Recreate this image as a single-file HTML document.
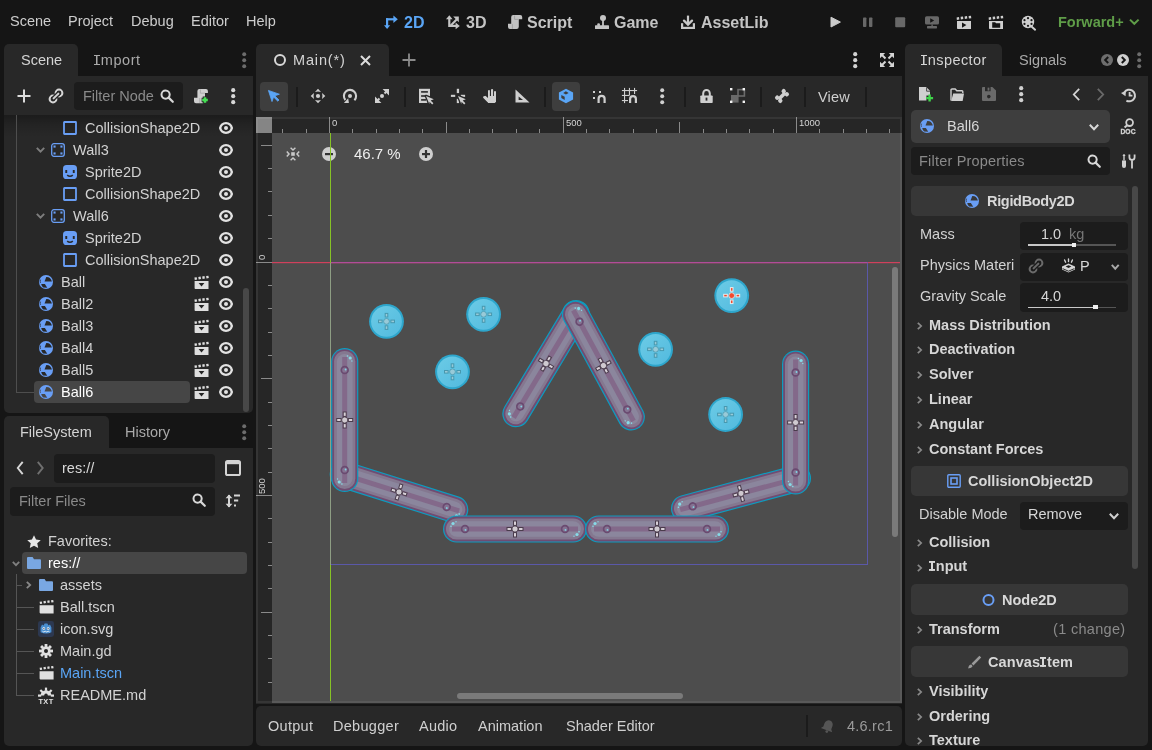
<!DOCTYPE html>
<html><head><meta charset="utf-8">
<style>
*{margin:0;padding:0;box-sizing:border-box}
html,body{width:1152px;height:750px;overflow:hidden;background:#151515}
body{font-family:"Liberation Sans",sans-serif;font-size:14.5px;color:#d2d2d2;position:relative}
.a{position:absolute}
.t{position:absolute;white-space:nowrap;line-height:normal;will-change:transform}
svg{position:absolute;overflow:visible;will-change:transform}
</style></head><body>
<div class="t" style="left:10px;top:13.08px;font-size:14.5px;color:#cdcdcd;">Scene</div>
<div class="t" style="left:68px;top:13.08px;font-size:14.5px;color:#cdcdcd;">Project</div>
<div class="t" style="left:131px;top:13.08px;font-size:14.5px;color:#cdcdcd;">Debug</div>
<div class="t" style="left:191px;top:13.08px;font-size:14.5px;color:#cdcdcd;">Editor</div>
<div class="t" style="left:246px;top:13.08px;font-size:14.5px;color:#cdcdcd;">Help</div>
<svg style="left:384px;top:15px" width="14" height="14" viewBox="0 0 14 14"><g fill="#5aa5f5"><rect x="2" y="3.2" width="2.2" height="8"/><path d="M0 10.2h6.2L3.1 14z"/><rect x="2" y="3.2" width="8" height="2.2"/><path d="M9.4 0.5v7.4L13.8 4.2z"/></g></svg>
<div class="t" style="left:403.5px;top:14.22px;font-size:16px;color:#5aa5f5;font-weight:bold;">2D</div>
<svg style="left:446px;top:15px" width="14" height="14" viewBox="0 0 14 14"><g fill="#c4c4c4"><rect x="2.2" y="3" width="2.2" height="9"/><path d="M0 4.3L3.3 0.3 6.6 4.3z"/><rect x="3" y="9.8" width="8" height="2.2"/><path d="M9.6 7.6l4.2 3.3-4.2 3.3z"/><path d="M3.3 10.4L10.6 3.1 12.1 4.6 4.8 11.9z"/><path d="M7.2 1.6h5.6v5.6z"/></g></svg>
<div class="t" style="left:465.5px;top:14.22px;font-size:16px;color:#c4c4c4;font-weight:bold;">3D</div>
<svg style="left:508px;top:15px" width="14" height="14" viewBox="0 0 14 14"><g fill="#c2c2c2"><path d="M5.2 0h7a2 2 0 0 1 2 2v2.2h-3.4v7.6a2.2 2.2 0 0 1-2.2 2.2H2a2 2 0 0 1-2-2V8.8h3.2V2a2 2 0 0 1 2-2z"/></g><path d="M4.4 9.2v4.6" stroke="#9a9a9a" stroke-width="0.8"/><path d="M6.6 0.6v3.8h4" stroke="#9a9a9a" stroke-width="0.8" fill="none"/></svg>
<div class="t" style="left:527.2px;top:14.22px;font-size:16px;color:#c4c4c4;font-weight:bold;">Script</div>
<svg style="left:595px;top:15px" width="14" height="14" viewBox="0 0 14 14"><g fill="#c4c4c4"><circle cx="8" cy="3" r="3"/><rect x="7.1" y="4" width="1.8" height="7"/><rect x="0" y="10.2" width="14" height="3.8" rx="0.6"/><rect x="2.2" y="8.2" width="2.8" height="3" rx="1.3"/></g></svg>
<div class="t" style="left:614.2px;top:14.22px;font-size:16px;color:#c4c4c4;font-weight:bold;">Game</div>
<svg style="left:681px;top:15px" width="14" height="14" viewBox="0 0 14 14"><g fill="#c8c8c8"><rect x="0" y="8.2" width="2.2" height="5.8"/><rect x="11.8" y="8.2" width="2.2" height="5.8"/><rect x="0" y="11.8" width="14" height="2.2"/><rect x="5.9" y="0.6" width="2.2" height="8"/></g><path d="M3 5.6l4 4 4-4" stroke="#c8c8c8" stroke-width="2.3" fill="none" stroke-linecap="round"/></svg>
<div class="t" style="left:700.5px;top:14.22px;font-size:16px;color:#c4c4c4;font-weight:bold;">AssetLib</div>
<svg style="left:830px;top:16px" width="12" height="12" viewBox="0 0 12 12"><path d="M1 1.2v9.8l9.4-4.9z" fill="#cbcbcb" stroke="#cbcbcb" stroke-width="1" stroke-linejoin="round"/></svg>
<svg style="left:862px;top:17px" width="12" height="11" viewBox="0 0 12 11"><rect x="1" y="0.5" width="3.4" height="9.6" rx="0.8" fill="#686868"/><rect x="7" y="0.5" width="3.4" height="9.6" rx="0.8" fill="#686868"/></svg>
<svg style="left:895px;top:17px" width="11" height="11" viewBox="0 0 11 11"><rect x="0.2" y="0.3" width="10" height="10" rx="1" fill="#686868"/></svg>
<svg style="left:925px;top:16px" width="14" height="13" viewBox="0 0 14 13"><rect x="0" y="0.3" width="14" height="8.3" rx="1.6" fill="#686868"/><path d="M5.2 2.2v4.6l4-2.3z" fill="#151515"/><rect x="6.4" y="8.4" width="1.4" height="2" fill="#686868"/><rect x="2" y="10" width="10" height="2.4" rx="0.6" fill="#686868"/></svg>
<svg style="left:956px;top:16px" width="16" height="14" viewBox="0 0 16 14"><g fill="#cfcfcf"><path d="M0.6 1.4l2.4-.4.3 2.6-2.4.4z"/><path d="M4.6 0.8l2.4-.4.3 2.6-2.4.4z"/><path d="M8.6 0.4l2.4-.4.3 2.6-2.4.4z"/><path d="M12.6 0l2.4-.3.3 2.6-2.4.3z"/><path d="M1 5h14v8H1.8a.8.8 0 0 1-.8-.8z"/></g><path d="M6 6.4v5.4l4.4-2.7z" fill="#151515"/></svg>
<svg style="left:988px;top:16px" width="16" height="14" viewBox="0 0 16 14"><g fill="#cfcfcf"><path d="M0.6 1.4l2.4-.4.3 2.6-2.4.4z"/><path d="M4.6 0.8l2.4-.4.3 2.6-2.4.4z"/><path d="M8.6 0.4l2.4-.4.3 2.6-2.4.4z"/><path d="M12.6 0l2.4-.3.3 2.6-2.4.3z"/><path d="M1 5h14v8H1.8a.8.8 0 0 1-.8-.8z"/></g><path d="M4.2 6.2h3l.8 1h4.2v4.6H4.2z" fill="#151515"/></svg>
<svg style="left:1021px;top:15px" width="16" height="16" viewBox="0 0 16 16"><circle cx="7" cy="7" r="6.2" fill="#cfcfcf"/><path d="M10.5 11.5l3.6 3.2" stroke="#cfcfcf" stroke-width="2" stroke-linecap="round"/><g fill="#151515"><circle cx="7" cy="3.2" r="1.1"/><circle cx="7" cy="10.8" r="1.1"/><circle cx="3.5" cy="5.2" r="1.1"/><circle cx="10.5" cy="5.2" r="1.1"/><circle cx="3.5" cy="8.9" r="1.1"/><circle cx="10.5" cy="8.9" r="1.1"/></g></svg>
<div class="t" style="left:1058.2px;top:14.08px;font-size:14.5px;color:#5f9d48;font-weight:bold;">Forward+</div>
<svg style="left:1129px;top:18px" width="11" height="8" viewBox="0 0 11 8"><path d="M1 1.6l4.3 4.2 4.3-4.2" stroke="#5f9d48" stroke-width="2" fill="none"/></svg>
<div class="a" style="left:4px;top:76px;width:249px;height:337px;background:#282828;border-radius:0 0 5px 5px"></div>
<div class="a" style="left:4px;top:44px;width:74px;height:33px;background:#282828;border-radius:5px 5px 0 0"></div>
<div class="t" style="left:20.7px;top:51.98px;font-size:14.5px;color:#d4d4d4;">Scene</div>
<div class="t" style="left:94.4px;top:51.98px;font-size:14.5px;color:#a9a9a9;letter-spacing:0.55px;"><span style="display:inline-block;width:5.4px;height:10.38px;margin:0 1.1px 0 0.3px;vertical-align:baseline;background:linear-gradient(#a9a9a9,#a9a9a9) 50% 0/1.5px 100% no-repeat,linear-gradient(#a9a9a9,#a9a9a9) 0 0/100% 1.3px no-repeat,linear-gradient(#a9a9a9,#a9a9a9) 0 100%/100% 1.3px no-repeat"></span>mport</div>
<svg style="left:241px;top:51px" width="7" height="19" viewBox="0 0 7 19"><circle cx="3.2" cy="3.2" r="2.0" fill="#6c6c6c"/><circle cx="3.2" cy="9.2" r="2.0" fill="#6c6c6c"/><circle cx="3.2" cy="15.2" r="2.0" fill="#6c6c6c"/></svg>
<svg style="left:17px;top:89px" width="14" height="14" viewBox="0 0 14 14"><path d="M7 0.5v13M0.5 7h13" stroke="#dcdcdc" stroke-width="2"/></svg>
<svg style="left:44px;top:84px" width="24" height="24" viewBox="0 0 24 24"><circle cx="15" cy="9" r="3.4" stroke="#d4d4d4" stroke-width="2" fill="none"/><circle cx="9" cy="15" r="3.4" stroke="#d4d4d4" stroke-width="2" fill="none"/><path d="M9.6 14.4L14.4 9.6" stroke="#282828" stroke-width="4.4" stroke-linecap="round"/><path d="M9.6 14.4L14.4 9.6" stroke="#d4d4d4" stroke-width="2" stroke-linecap="round"/></svg>
<div class="a" style="left:74px;top:82px;width:109px;height:28px;background:#1c1c1c;border-radius:4px;"></div>
<div class="t" style="left:83px;top:87.88px;font-size:14.5px;color:#8a8a8a;">Filter Node</div>
<svg style="left:160px;top:89px" width="14" height="14" viewBox="0 0 14 14"><circle cx="5.6" cy="5.6" r="4.1" stroke="#d8d8d8" stroke-width="2" fill="none"/><path d="M8.6 8.6l4.2 4.2" stroke="#d8d8d8" stroke-width="2.2" stroke-linecap="round"/></svg>
<svg style="left:190px;top:84px" width="24" height="24" viewBox="0 0 24 24"><path d="M9.4 5h6.6a1.9 1.9 0 0 1 1.9 1.9V9H15V17.2a2 2 0 0 1-2 2H6a2 2 0 0 1-2-2V13.8h3.4V7a2 2 0 0 1 2-2z" fill="#cfcfcf"/><path d="M9.8 14v5M10.4 5.6v3.6h4.6" stroke="#a8a8a8" stroke-width="0.9" fill="none"/><path d="M15 12.6v6.8M11.6 16h6.8" stroke="#282828" stroke-width="4.6"/><path d="M15 13.2v5.6M12.2 16h5.6" stroke="#44e053" stroke-width="2.5"/></svg>
<svg style="left:230px;top:87px" width="7" height="19" viewBox="0 0 7 19"><circle cx="3.2" cy="3.2" r="2.1" fill="#d8d8d8"/><circle cx="3.2" cy="9.2" r="2.1" fill="#d8d8d8"/><circle cx="3.2" cy="15.2" r="2.1" fill="#d8d8d8"/></svg>
<div class="a" style="left:4px;top:115px;width:249px;height:22px;background:linear-gradient(rgba(0,0,0,0.32),rgba(0,0,0,0.12) 45%,rgba(0,0,0,0));"></div>
<div class="a" style="left:16px;top:115px;width:1px;height:278px;background:#4e4e4e;"></div>
<div class="a" style="left:16px;top:392px;width:18px;height:1px;background:#4e4e4e;"></div>
<svg style="left:63px;top:121px" width="14" height="14" viewBox="0 0 14 14"><rect x="1" y="1" width="12" height="12" stroke="#699ef5" stroke-width="1.8" fill="none" rx="0.4"/></svg>
<div class="t" style="left:84.7px;top:119.88px;font-size:14.5px;color:#d2d2d2;">CollisionShape2D</div>
<svg style="left:219px;top:122px" width="15" height="13" viewBox="0 0 15 13"><ellipse cx="7" cy="6" rx="5.7" ry="4.8" stroke="#e2e2e2" stroke-width="2.3" fill="none"/><path d="M0 6L2 3.6V8.4z M14 6L12 3.6V8.4z" fill="#e2e2e2"/><circle cx="7" cy="6" r="2" fill="#e2e2e2"/></svg>
<svg style="left:36px;top:147px" width="9" height="5.5" viewBox="0 0 9 5.5"><path d="M0.8 0.8L4.5 4.7L8.2 0.8" stroke="#7e7e7e" stroke-width="1.9" fill="none"/></svg>
<svg style="left:51px;top:143px" width="14" height="14" viewBox="0 0 14 14"><rect x="0.7" y="0.7" width="12.6" height="12.6" rx="2.2" stroke="#699ef5" stroke-width="1.3" fill="none"/><g fill="#699ef5"><rect x="2.5" y="2.5" width="2.1" height="2.1"/><rect x="9.4" y="2.5" width="2.1" height="2.1"/><rect x="2.5" y="9.4" width="2.1" height="2.1"/><rect x="9.4" y="9.4" width="2.1" height="2.1"/></g></svg>
<div class="t" style="left:72.6px;top:141.88px;font-size:14.5px;color:#d2d2d2;">Wall3</div>
<svg style="left:219px;top:144px" width="15" height="13" viewBox="0 0 15 13"><ellipse cx="7" cy="6" rx="5.7" ry="4.8" stroke="#e2e2e2" stroke-width="2.3" fill="none"/><path d="M0 6L2 3.6V8.4z M14 6L12 3.6V8.4z" fill="#e2e2e2"/><circle cx="7" cy="6" r="2" fill="#e2e2e2"/></svg>
<svg style="left:63px;top:165px" width="14" height="14" viewBox="0 0 14 14"><rect x="0" y="0" width="14" height="14" rx="3.6" fill="#699ef5"/><rect x="2.3" y="5" width="1.9" height="3" fill="#282828"/><rect x="9.8" y="5" width="1.9" height="3" fill="#282828"/><path d="M4.2 10.2 Q7 12.4 9.8 10.2" stroke="#282828" stroke-width="1.6" fill="none"/></svg>
<div class="t" style="left:84.7px;top:163.88px;font-size:14.5px;color:#d2d2d2;">Sprite2D</div>
<svg style="left:219px;top:166px" width="15" height="13" viewBox="0 0 15 13"><ellipse cx="7" cy="6" rx="5.7" ry="4.8" stroke="#e2e2e2" stroke-width="2.3" fill="none"/><path d="M0 6L2 3.6V8.4z M14 6L12 3.6V8.4z" fill="#e2e2e2"/><circle cx="7" cy="6" r="2" fill="#e2e2e2"/></svg>
<svg style="left:63px;top:187px" width="14" height="14" viewBox="0 0 14 14"><rect x="1" y="1" width="12" height="12" stroke="#699ef5" stroke-width="1.8" fill="none" rx="0.4"/></svg>
<div class="t" style="left:84.7px;top:185.88px;font-size:14.5px;color:#d2d2d2;">CollisionShape2D</div>
<svg style="left:219px;top:188px" width="15" height="13" viewBox="0 0 15 13"><ellipse cx="7" cy="6" rx="5.7" ry="4.8" stroke="#e2e2e2" stroke-width="2.3" fill="none"/><path d="M0 6L2 3.6V8.4z M14 6L12 3.6V8.4z" fill="#e2e2e2"/><circle cx="7" cy="6" r="2" fill="#e2e2e2"/></svg>
<svg style="left:36px;top:213px" width="9" height="5.5" viewBox="0 0 9 5.5"><path d="M0.8 0.8L4.5 4.7L8.2 0.8" stroke="#7e7e7e" stroke-width="1.9" fill="none"/></svg>
<svg style="left:51px;top:209px" width="14" height="14" viewBox="0 0 14 14"><rect x="0.7" y="0.7" width="12.6" height="12.6" rx="2.2" stroke="#699ef5" stroke-width="1.3" fill="none"/><g fill="#699ef5"><rect x="2.5" y="2.5" width="2.1" height="2.1"/><rect x="9.4" y="2.5" width="2.1" height="2.1"/><rect x="2.5" y="9.4" width="2.1" height="2.1"/><rect x="9.4" y="9.4" width="2.1" height="2.1"/></g></svg>
<div class="t" style="left:72.6px;top:207.88px;font-size:14.5px;color:#d2d2d2;">Wall6</div>
<svg style="left:219px;top:210px" width="15" height="13" viewBox="0 0 15 13"><ellipse cx="7" cy="6" rx="5.7" ry="4.8" stroke="#e2e2e2" stroke-width="2.3" fill="none"/><path d="M0 6L2 3.6V8.4z M14 6L12 3.6V8.4z" fill="#e2e2e2"/><circle cx="7" cy="6" r="2" fill="#e2e2e2"/></svg>
<svg style="left:63px;top:231px" width="14" height="14" viewBox="0 0 14 14"><rect x="0" y="0" width="14" height="14" rx="3.6" fill="#699ef5"/><rect x="2.3" y="5" width="1.9" height="3" fill="#282828"/><rect x="9.8" y="5" width="1.9" height="3" fill="#282828"/><path d="M4.2 10.2 Q7 12.4 9.8 10.2" stroke="#282828" stroke-width="1.6" fill="none"/></svg>
<div class="t" style="left:84.7px;top:229.88px;font-size:14.5px;color:#d2d2d2;">Sprite2D</div>
<svg style="left:219px;top:232px" width="15" height="13" viewBox="0 0 15 13"><ellipse cx="7" cy="6" rx="5.7" ry="4.8" stroke="#e2e2e2" stroke-width="2.3" fill="none"/><path d="M0 6L2 3.6V8.4z M14 6L12 3.6V8.4z" fill="#e2e2e2"/><circle cx="7" cy="6" r="2" fill="#e2e2e2"/></svg>
<svg style="left:63px;top:253px" width="14" height="14" viewBox="0 0 14 14"><rect x="1" y="1" width="12" height="12" stroke="#699ef5" stroke-width="1.8" fill="none" rx="0.4"/></svg>
<div class="t" style="left:84.7px;top:251.88px;font-size:14.5px;color:#d2d2d2;">CollisionShape2D</div>
<svg style="left:219px;top:254px" width="15" height="13" viewBox="0 0 15 13"><ellipse cx="7" cy="6" rx="5.7" ry="4.8" stroke="#e2e2e2" stroke-width="2.3" fill="none"/><path d="M0 6L2 3.6V8.4z M14 6L12 3.6V8.4z" fill="#e2e2e2"/><circle cx="7" cy="6" r="2" fill="#e2e2e2"/></svg>
<svg style="left:39px;top:275px" width="14" height="14" viewBox="0 0 14 14"><circle cx="7" cy="7" r="7" fill="#699ef5"/><path d="M5.5 6.5L7.3 2.1Q11.2 1.7 12.9 6.5z" fill="#282828"/><path d="M2.2 8.9H5.9L8.2 12.7 4.2 12.5Q2.6 11.2 2.2 8.9z" fill="#282828"/><path d="M1.6 4.6A6.2 6.2 0 0 0 1.4 8" stroke="#282828" stroke-width="0.7" fill="none"/></svg>
<div class="t" style="left:60.5px;top:273.88px;font-size:14.5px;color:#d2d2d2;">Ball</div>
<svg style="left:194.4px;top:276px" width="15" height="13" viewBox="0 0 15 13"><g fill="#dedede"><path d="M0.4 1.6l2.3-.4.4 2.4-2.3.4z"/><path d="M4.3 1l2.3-.4.4 2.4-2.3.4z"/><path d="M8.2 0.5l2.3-.4.4 2.4-2.3.4z"/><path d="M12.1 0l2.3-.3.4 2.4-2.3.3z"/><path d="M0.6 5h13.9v8H1.4a.8.8 0 0 1-.8-.8z"/></g><path d="M4.6 7h5.8l-2.9 3.5z" fill="#242424"/></svg>
<svg style="left:219px;top:276px" width="15" height="13" viewBox="0 0 15 13"><ellipse cx="7" cy="6" rx="5.7" ry="4.8" stroke="#e2e2e2" stroke-width="2.3" fill="none"/><path d="M0 6L2 3.6V8.4z M14 6L12 3.6V8.4z" fill="#e2e2e2"/><circle cx="7" cy="6" r="2" fill="#e2e2e2"/></svg>
<svg style="left:39px;top:297px" width="14" height="14" viewBox="0 0 14 14"><circle cx="7" cy="7" r="7" fill="#699ef5"/><path d="M5.5 6.5L7.3 2.1Q11.2 1.7 12.9 6.5z" fill="#282828"/><path d="M2.2 8.9H5.9L8.2 12.7 4.2 12.5Q2.6 11.2 2.2 8.9z" fill="#282828"/><path d="M1.6 4.6A6.2 6.2 0 0 0 1.4 8" stroke="#282828" stroke-width="0.7" fill="none"/></svg>
<div class="t" style="left:60.5px;top:295.88px;font-size:14.5px;color:#d2d2d2;">Ball2</div>
<svg style="left:194.4px;top:298px" width="15" height="13" viewBox="0 0 15 13"><g fill="#dedede"><path d="M0.4 1.6l2.3-.4.4 2.4-2.3.4z"/><path d="M4.3 1l2.3-.4.4 2.4-2.3.4z"/><path d="M8.2 0.5l2.3-.4.4 2.4-2.3.4z"/><path d="M12.1 0l2.3-.3.4 2.4-2.3.3z"/><path d="M0.6 5h13.9v8H1.4a.8.8 0 0 1-.8-.8z"/></g><path d="M4.6 7h5.8l-2.9 3.5z" fill="#242424"/></svg>
<svg style="left:219px;top:298px" width="15" height="13" viewBox="0 0 15 13"><ellipse cx="7" cy="6" rx="5.7" ry="4.8" stroke="#e2e2e2" stroke-width="2.3" fill="none"/><path d="M0 6L2 3.6V8.4z M14 6L12 3.6V8.4z" fill="#e2e2e2"/><circle cx="7" cy="6" r="2" fill="#e2e2e2"/></svg>
<svg style="left:39px;top:319px" width="14" height="14" viewBox="0 0 14 14"><circle cx="7" cy="7" r="7" fill="#699ef5"/><path d="M5.5 6.5L7.3 2.1Q11.2 1.7 12.9 6.5z" fill="#282828"/><path d="M2.2 8.9H5.9L8.2 12.7 4.2 12.5Q2.6 11.2 2.2 8.9z" fill="#282828"/><path d="M1.6 4.6A6.2 6.2 0 0 0 1.4 8" stroke="#282828" stroke-width="0.7" fill="none"/></svg>
<div class="t" style="left:60.5px;top:317.88px;font-size:14.5px;color:#d2d2d2;">Ball3</div>
<svg style="left:194.4px;top:320px" width="15" height="13" viewBox="0 0 15 13"><g fill="#dedede"><path d="M0.4 1.6l2.3-.4.4 2.4-2.3.4z"/><path d="M4.3 1l2.3-.4.4 2.4-2.3.4z"/><path d="M8.2 0.5l2.3-.4.4 2.4-2.3.4z"/><path d="M12.1 0l2.3-.3.4 2.4-2.3.3z"/><path d="M0.6 5h13.9v8H1.4a.8.8 0 0 1-.8-.8z"/></g><path d="M4.6 7h5.8l-2.9 3.5z" fill="#242424"/></svg>
<svg style="left:219px;top:320px" width="15" height="13" viewBox="0 0 15 13"><ellipse cx="7" cy="6" rx="5.7" ry="4.8" stroke="#e2e2e2" stroke-width="2.3" fill="none"/><path d="M0 6L2 3.6V8.4z M14 6L12 3.6V8.4z" fill="#e2e2e2"/><circle cx="7" cy="6" r="2" fill="#e2e2e2"/></svg>
<svg style="left:39px;top:341px" width="14" height="14" viewBox="0 0 14 14"><circle cx="7" cy="7" r="7" fill="#699ef5"/><path d="M5.5 6.5L7.3 2.1Q11.2 1.7 12.9 6.5z" fill="#282828"/><path d="M2.2 8.9H5.9L8.2 12.7 4.2 12.5Q2.6 11.2 2.2 8.9z" fill="#282828"/><path d="M1.6 4.6A6.2 6.2 0 0 0 1.4 8" stroke="#282828" stroke-width="0.7" fill="none"/></svg>
<div class="t" style="left:60.5px;top:339.88px;font-size:14.5px;color:#d2d2d2;">Ball4</div>
<svg style="left:194.4px;top:342px" width="15" height="13" viewBox="0 0 15 13"><g fill="#dedede"><path d="M0.4 1.6l2.3-.4.4 2.4-2.3.4z"/><path d="M4.3 1l2.3-.4.4 2.4-2.3.4z"/><path d="M8.2 0.5l2.3-.4.4 2.4-2.3.4z"/><path d="M12.1 0l2.3-.3.4 2.4-2.3.3z"/><path d="M0.6 5h13.9v8H1.4a.8.8 0 0 1-.8-.8z"/></g><path d="M4.6 7h5.8l-2.9 3.5z" fill="#242424"/></svg>
<svg style="left:219px;top:342px" width="15" height="13" viewBox="0 0 15 13"><ellipse cx="7" cy="6" rx="5.7" ry="4.8" stroke="#e2e2e2" stroke-width="2.3" fill="none"/><path d="M0 6L2 3.6V8.4z M14 6L12 3.6V8.4z" fill="#e2e2e2"/><circle cx="7" cy="6" r="2" fill="#e2e2e2"/></svg>
<svg style="left:39px;top:363px" width="14" height="14" viewBox="0 0 14 14"><circle cx="7" cy="7" r="7" fill="#699ef5"/><path d="M5.5 6.5L7.3 2.1Q11.2 1.7 12.9 6.5z" fill="#282828"/><path d="M2.2 8.9H5.9L8.2 12.7 4.2 12.5Q2.6 11.2 2.2 8.9z" fill="#282828"/><path d="M1.6 4.6A6.2 6.2 0 0 0 1.4 8" stroke="#282828" stroke-width="0.7" fill="none"/></svg>
<div class="t" style="left:60.5px;top:361.88px;font-size:14.5px;color:#d2d2d2;">Ball5</div>
<svg style="left:194.4px;top:364px" width="15" height="13" viewBox="0 0 15 13"><g fill="#dedede"><path d="M0.4 1.6l2.3-.4.4 2.4-2.3.4z"/><path d="M4.3 1l2.3-.4.4 2.4-2.3.4z"/><path d="M8.2 0.5l2.3-.4.4 2.4-2.3.4z"/><path d="M12.1 0l2.3-.3.4 2.4-2.3.3z"/><path d="M0.6 5h13.9v8H1.4a.8.8 0 0 1-.8-.8z"/></g><path d="M4.6 7h5.8l-2.9 3.5z" fill="#242424"/></svg>
<svg style="left:219px;top:364px" width="15" height="13" viewBox="0 0 15 13"><ellipse cx="7" cy="6" rx="5.7" ry="4.8" stroke="#e2e2e2" stroke-width="2.3" fill="none"/><path d="M0 6L2 3.6V8.4z M14 6L12 3.6V8.4z" fill="#e2e2e2"/><circle cx="7" cy="6" r="2" fill="#e2e2e2"/></svg>
<div class="a" style="left:34px;top:381px;width:156px;height:22px;background:#464646;border-radius:4px;"></div>
<svg style="left:39px;top:385px" width="14" height="14" viewBox="0 0 14 14"><circle cx="7" cy="7" r="7" fill="#699ef5"/><path d="M5.5 6.5L7.3 2.1Q11.2 1.7 12.9 6.5z" fill="#464646"/><path d="M2.2 8.9H5.9L8.2 12.7 4.2 12.5Q2.6 11.2 2.2 8.9z" fill="#464646"/><path d="M1.6 4.6A6.2 6.2 0 0 0 1.4 8" stroke="#464646" stroke-width="0.7" fill="none"/></svg>
<div class="t" style="left:60.5px;top:383.88px;font-size:14.5px;color:#ffffff;">Ball6</div>
<svg style="left:194.4px;top:386px" width="15" height="13" viewBox="0 0 15 13"><g fill="#dedede"><path d="M0.4 1.6l2.3-.4.4 2.4-2.3.4z"/><path d="M4.3 1l2.3-.4.4 2.4-2.3.4z"/><path d="M8.2 0.5l2.3-.4.4 2.4-2.3.4z"/><path d="M12.1 0l2.3-.3.4 2.4-2.3.3z"/><path d="M0.6 5h13.9v8H1.4a.8.8 0 0 1-.8-.8z"/></g><path d="M4.6 7h5.8l-2.9 3.5z" fill="#242424"/></svg>
<svg style="left:219px;top:386px" width="15" height="13" viewBox="0 0 15 13"><ellipse cx="7" cy="6" rx="5.7" ry="4.8" stroke="#e2e2e2" stroke-width="2.3" fill="none"/><path d="M0 6L2 3.6V8.4z M14 6L12 3.6V8.4z" fill="#e2e2e2"/><circle cx="7" cy="6" r="2" fill="#e2e2e2"/></svg>
<div class="a" style="left:243px;top:288px;width:6px;height:124px;background:#484848;border-radius:3px;"></div>
<div class="a" style="left:4px;top:448px;width:249px;height:298px;background:#282828;border-radius:0 0 5px 5px"></div>
<div class="a" style="left:4px;top:416px;width:105px;height:33px;background:#282828;border-radius:5px 5px 0 0"></div>
<div class="t" style="left:20.2px;top:423.78px;font-size:14.5px;color:#d4d4d4;">FileSystem</div>
<div class="t" style="left:125.4px;top:423.78px;font-size:14.5px;color:#a9a9a9;">History</div>
<svg style="left:241px;top:423px" width="7" height="19" viewBox="0 0 7 19"><circle cx="3.2" cy="3.2" r="2.0" fill="#6c6c6c"/><circle cx="3.2" cy="9.2" r="2.0" fill="#6c6c6c"/><circle cx="3.2" cy="15.2" r="2.0" fill="#6c6c6c"/></svg>
<svg style="left:17px;top:461px" width="6.5" height="14" viewBox="0 0 6.5 14"><path d="M5.7 0.8L0.8 7.0L5.7 13.2" stroke="#d6d6d6" stroke-width="1.9" fill="none"/></svg>
<svg style="left:37px;top:461px" width="6.5" height="14" viewBox="0 0 6.5 14"><path d="M0.8 0.8L5.7 7.0L0.8 13.2" stroke="#707070" stroke-width="1.9" fill="none"/></svg>
<div class="a" style="left:54px;top:454px;width:161px;height:29px;background:#1c1c1c;border-radius:4px;"></div>
<div class="t" style="left:62.2px;top:460.38px;font-size:14.5px;color:#d8d8d8;">res://</div>
<svg style="left:225px;top:460px" width="16" height="16" viewBox="0 0 16 16"><rect x="1" y="1" width="14" height="14" rx="1.6" stroke="#d4d4d4" stroke-width="2" fill="none"/><rect x="1" y="1" width="14" height="3.2" fill="#d4d4d4"/></svg>
<div class="a" style="left:10px;top:487px;width:205px;height:29px;background:#1c1c1c;border-radius:4px;"></div>
<div class="t" style="left:18.6px;top:492.88px;font-size:14.5px;color:#8a8a8a;">Filter Files</div>
<svg style="left:192px;top:493px" width="14" height="14" viewBox="0 0 14 14"><circle cx="5.6" cy="5.6" r="4.1" stroke="#d8d8d8" stroke-width="2" fill="none"/><path d="M8.6 8.6l4.2 4.2" stroke="#d8d8d8" stroke-width="2.2" stroke-linecap="round"/></svg>
<svg style="left:225px;top:494px" width="16" height="15" viewBox="0 0 16 15"><path d="M4 1v12" stroke="#d4d4d4" stroke-width="2"/><path d="M0.6 4.2L4 0.6 7.4 4.2zM0.6 9.8L4 13.4 7.4 9.8z" fill="#d4d4d4"/><path d="M9 1.4h6M9 6.4h4.2M9 11.6h2" stroke="#d4d4d4" stroke-width="2"/></svg>
<svg style="left:27px;top:535px" width="14" height="13" viewBox="0 0 14 13"><path d="M7 0.3l2.05 4.3 4.7.55-3.5 3.2.95 4.65L7 10.7 2.8 13l.95-4.65L.25 5.15l4.7-.55z" fill="#e6e6e6"/></svg>
<div class="t" style="left:48.3px;top:533.38px;font-size:14.5px;color:#d2d2d2;">Favorites:</div>
<div class="a" style="left:22px;top:552px;width:225px;height:22px;background:#464646;border-radius:4px;"></div>
<svg style="left:12px;top:561px" width="8" height="5" viewBox="0 0 8 5"><path d="M0.8 0.8L4.0 4.2L7.2 0.8" stroke="#808080" stroke-width="1.8" fill="none"/></svg>
<svg style="left:27px;top:557px" width="14" height="12" viewBox="0 0 14 12"><path d="M0 1a1 1 0 0 1 1-1h4.6l1.4 2.2H13a1 1 0 0 1 1 1V11a1 1 0 0 1-1 1H1a1 1 0 0 1-1-1z" fill="#79a7e2"/></svg>
<div class="t" style="left:48.3px;top:554.88px;font-size:14.5px;color:#ffffff;">res://</div>
<div class="a" style="left:16px;top:574px;width:1px;height:121px;background:#555555;"></div>
<div class="a" style="left:16px;top:585px;width:6px;height:1px;background:#555555;"></div>
<div class="a" style="left:16px;top:607px;width:18px;height:1px;background:#555555;"></div>
<div class="a" style="left:16px;top:629px;width:18px;height:1px;background:#555555;"></div>
<div class="a" style="left:16px;top:651px;width:18px;height:1px;background:#555555;"></div>
<div class="a" style="left:16px;top:673px;width:18px;height:1px;background:#555555;"></div>
<div class="a" style="left:16px;top:695px;width:18px;height:1px;background:#555555;"></div>
<svg style="left:26px;top:581px" width="5" height="8" viewBox="0 0 5 8"><path d="M0.8 0.8L4.2 4.0L0.8 7.2" stroke="#888888" stroke-width="1.8" fill="none"/></svg>
<svg style="left:39px;top:579px" width="14" height="12" viewBox="0 0 14 12"><path d="M0 1a1 1 0 0 1 1-1h4.6l1.4 2.2H13a1 1 0 0 1 1 1V11a1 1 0 0 1-1 1H1a1 1 0 0 1-1-1z" fill="#79a7e2"/></svg>
<div class="t" style="left:60.3px;top:576.88px;font-size:14.5px;color:#d2d2d2;">assets</div>
<svg style="left:39px;top:600px" width="15" height="14" viewBox="0 0 15 14"><g fill="#e0e0e0"><path d="M0.6 1.8l2.2-.4.4 2.3-2.2.4z"/><path d="M4.4 1.2l2.2-.4.4 2.3-2.2.4z"/><path d="M8.2 0.7l2.2-.4.4 2.3-2.2.4z"/><path d="M12 0.2l2.2-.3.4 2.3-2.2.3z"/><path d="M0.6 5.2h14v8.2H1.4a.8.8 0 0 1-.8-.8z"/></g></svg>
<div class="t" style="left:60.3px;top:598.88px;font-size:14.5px;color:#d2d2d2;">Ball.tscn</div>
<svg style="left:38px;top:621px" width="16" height="16" viewBox="0 0 16 16"><rect x="0" y="0" width="16" height="16" rx="2.4" fill="#2c3850"/><path d="M2.6 6.4L4 3.6 5.6 4.6 6.6 2.6H9.4L10.4 4.6 12 3.6 13.4 6.4V11.2Q8 13.8 2.6 11.2z" fill="#4a8fd0"/><circle cx="5.8" cy="7.6" r="1.3" fill="#fff"/><circle cx="10.2" cy="7.6" r="1.3" fill="#fff"/><circle cx="5.9" cy="7.7" r="0.6" fill="#2c3850"/><circle cx="10.1" cy="7.7" r="0.6" fill="#2c3850"/><path d="M4.4 10.2L5.8 11 7.2 10.2 8.8 11 10.2 10.2 11.6 11" stroke="#fff" stroke-width="0.8" fill="none"/></svg>
<div class="t" style="left:60.3px;top:620.88px;font-size:14.5px;color:#d2d2d2;">icon.svg</div>
<svg style="left:39px;top:644px" width="14" height="14" viewBox="0 0 14 14"><g fill="#e0e0e0"><circle cx="7" cy="7" r="4.6"/><rect x="5.6" y="0" width="2.8" height="3" transform="rotate(0 7 7)"/><rect x="5.6" y="0" width="2.8" height="3" transform="rotate(45 7 7)"/><rect x="5.6" y="0" width="2.8" height="3" transform="rotate(90 7 7)"/><rect x="5.6" y="0" width="2.8" height="3" transform="rotate(135 7 7)"/><rect x="5.6" y="0" width="2.8" height="3" transform="rotate(180 7 7)"/><rect x="5.6" y="0" width="2.8" height="3" transform="rotate(225 7 7)"/><rect x="5.6" y="0" width="2.8" height="3" transform="rotate(270 7 7)"/><rect x="5.6" y="0" width="2.8" height="3" transform="rotate(315 7 7)"/></g><circle cx="7" cy="7" r="2" fill="#242424"/></svg>
<div class="t" style="left:60.3px;top:642.88px;font-size:14.5px;color:#d2d2d2;">Main.gd</div>
<svg style="left:39px;top:666px" width="15" height="14" viewBox="0 0 15 14"><g fill="#e0e0e0"><path d="M0.6 1.8l2.2-.4.4 2.3-2.2.4z"/><path d="M4.4 1.2l2.2-.4.4 2.3-2.2.4z"/><path d="M8.2 0.7l2.2-.4.4 2.3-2.2.4z"/><path d="M12 0.2l2.2-.3.4 2.3-2.2.3z"/><path d="M0.6 5.2h14v8.2H1.4a.8.8 0 0 1-.8-.8z"/></g></svg>
<div class="t" style="left:60.3px;top:664.88px;font-size:14.5px;color:#5aa5f5;">Main.tscn</div>
<svg style="left:38px;top:687px;will-change:transform" width="16" height="17" viewBox="0 0 16 17"><g fill="#e0e0e0"><path d="M2.6 8.6A5.4 5.4 0 0 1 13.4 8.6z"/><rect x="6.9" y="0.6" width="2.2" height="3.2" transform="rotate(-90 8 8.6)"/><rect x="6.9" y="0.6" width="2.2" height="3.2" transform="rotate(-45 8 8.6)"/><rect x="6.9" y="0.6" width="2.2" height="3.2" transform="rotate(0 8 8.6)"/><rect x="6.9" y="0.6" width="2.2" height="3.2" transform="rotate(45 8 8.6)"/><rect x="6.9" y="0.6" width="2.2" height="3.2" transform="rotate(90 8 8.6)"/></g><circle cx="8" cy="8.4" r="1.8" fill="#282828"/><text x="8" y="16.6" font-family="Liberation Sans" font-weight="bold" font-size="7.4" text-anchor="middle" fill="#e0e0e0" letter-spacing="0.4">TXT</text></svg>
<div class="t" style="left:60.3px;top:686.88px;font-size:14.5px;color:#d2d2d2;">README.md</div>
<div class="a" style="left:256px;top:76px;width:646px;height:628px;background:#282828;"></div>
<div class="a" style="left:256px;top:44px;width:133px;height:33px;background:#282828;border-radius:5px 5px 0 0"></div>
<svg style="left:274px;top:54px" width="12" height="12" viewBox="0 0 12 12"><circle cx="6" cy="6" r="5" stroke="#d8d8d8" stroke-width="2" fill="none"/></svg>
<div class="t" style="left:292.7px;top:52.18px;font-size:14.5px;color:#d4d4d4;letter-spacing:0.85px;">Main(*)</div>
<svg style="left:360px;top:55px" width="11" height="11" viewBox="0 0 11 11"><path d="M1 1l9 9M10 1l-9 9" stroke="#dcdcdc" stroke-width="2"/></svg>
<svg style="left:402px;top:53px" width="14" height="14" viewBox="0 0 14 14"><path d="M7 0.5v13M0.5 7h13" stroke="#8a8a8a" stroke-width="1.8"/></svg>
<svg style="left:852px;top:51px" width="7" height="19" viewBox="0 0 7 19"><circle cx="3.2" cy="3.2" r="2.1" fill="#d2d2d2"/><circle cx="3.2" cy="9.2" r="2.1" fill="#d2d2d2"/><circle cx="3.2" cy="15.2" r="2.1" fill="#d2d2d2"/></svg>
<svg style="left:880px;top:53px" width="14" height="14" viewBox="0 0 14 14"><g fill="#d4d4d4"><path d="M0 0h5.2L0 5.2z"/><path d="M14 0v5.2L8.8 0z"/><path d="M0 14V8.8L5.2 14z"/><path d="M14 14H8.8L14 8.8z"/></g><path d="M1.5 1.5l4 4M12.5 1.5l-4 4M1.5 12.5l4-4M12.5 12.5l-4-4" stroke="#d4d4d4" stroke-width="2"/></svg>
<div class="a" style="left:260px;top:82px;width:28px;height:29px;background:#3e3e3e;border-radius:4px;"></div>
<svg style="left:267px;top:89px" width="14" height="14" viewBox="0 0 14 14"><path d="M1.4 1.4L12.4 5.2 7.8 6.8 12 11 10.8 12.2 6.6 8 5 12.6z" fill="#5aa5f5" stroke="#5aa5f5" stroke-width="0.8" stroke-linejoin="round"/></svg>
<div class="a" style="left:295.5px;top:86.5px;width:2px;height:20px;background:#1b1b1b;"></div>
<div class="a" style="left:403.5px;top:86.5px;width:2px;height:20px;background:#1b1b1b;"></div>
<div class="a" style="left:544px;top:86.5px;width:2px;height:20px;background:#1b1b1b;"></div>
<div class="a" style="left:684px;top:86.5px;width:2px;height:20px;background:#1b1b1b;"></div>
<div class="a" style="left:759.5px;top:86.5px;width:2px;height:20px;background:#1b1b1b;"></div>
<div class="a" style="left:803.5px;top:86.5px;width:2px;height:20px;background:#1b1b1b;"></div>
<div class="a" style="left:864.5px;top:86.5px;width:2px;height:20px;background:#1b1b1b;"></div>
<svg style="left:308px;top:86px" width="20" height="20" viewBox="0 0 20 20"><g fill="#cfcfcf"><circle cx="10" cy="10" r="2.1"/><path d="M10 2.7L13 6Q10 5.1 7 6z"/><path d="M10 17.3L13 14Q10 14.9 7 14z"/><path d="M2.7 10L6 7Q5.1 10 6 13z"/><path d="M17.3 10L14 7Q14.9 10 14 13z"/></g></svg>
<svg style="left:340px;top:86px" width="20" height="20" viewBox="0 0 20 20"><circle cx="10" cy="10" r="2" fill="#cfcfcf"/><path d="M14.4 14.2A6.1 6.1 0 1 0 5.4 14" stroke="#cfcfcf" stroke-width="2.1" fill="none"/><path d="M3.9 17H8.9L8.2 12.2z" fill="#cfcfcf"/></svg>
<svg style="left:374px;top:88px" width="16" height="16" viewBox="0 0 16 16"><circle cx="8" cy="8" r="2" fill="#cfcfcf"/><path d="M8.6 1H15V7.4z" fill="#cfcfcf"/><path d="M1 8.6V15H7.4z" fill="#cfcfcf"/><path d="M10.5 5.5l1.8-1.8M5.5 10.5l-1.8 1.8" stroke="#cfcfcf" stroke-width="2"/></svg>
<svg style="left:416px;top:86px" width="20" height="20" viewBox="0 0 20 20"><rect x="3" y="2.8" width="11" height="14.2" fill="#cfcfcf"/><g fill="#282828"><rect x="5.1" y="5.1" width="6.8" height="1.6"/><rect x="5.1" y="9.2" width="5" height="1.6"/><rect x="5.1" y="13.1" width="5" height="1.6"/><rect x="11.6" y="10" width="4" height="8"/></g><path d="M10 10L17.8 13.3 14.7 14.5 17.4 17.2 16.2 18.4 13.5 15.7 13.3 17.9z" fill="#282828" stroke="#282828" stroke-width="2.6" stroke-linejoin="round"/><path d="M10 10L17.8 13.3 14.7 14.5 17.4 17.2 16.2 18.4 13.5 15.7 13.3 17.9z" fill="#cfcfcf"/></svg>
<svg style="left:448px;top:86px" width="20" height="20" viewBox="0 0 20 20"><g fill="#cfcfcf"><rect x="8.8" y="2.8" width="2.3" height="4.3"/><rect x="2.9" y="8.8" width="4.3" height="2.1"/><rect x="12.8" y="8.8" width="4.3" height="2.1"/><rect x="8.8" y="12.8" width="2.3" height="4.3"/></g><path d="M10 10L17.8 13.3 14.7 14.5 17.4 17.2 16.2 18.4 13.5 15.7 13.3 17.9z" fill="#282828" stroke="#282828" stroke-width="2.6" stroke-linejoin="round"/><path d="M10 10L17.8 13.3 14.7 14.5 17.4 17.2 16.2 18.4 13.5 15.7 13.3 17.9z" fill="#cfcfcf"/></svg>
<svg style="left:480px;top:86px" width="20" height="20" viewBox="0 0 20 20"><g fill="#cfcfcf"><rect x="8" y="3.9" width="1.9" height="10" rx="0.95"/><rect x="11" y="2.9" width="2.1" height="10" rx="1"/><rect x="14" y="4.9" width="2" height="10" rx="1"/><path d="M8 9.9H16V15.8L14.8 17.1H8z"/><path d="M3.6 11.1L8.6 16.4 8.6 12.6 5.4 9.8z" /></g><path d="M4.2 11.2L8.4 15.6" stroke="#cfcfcf" stroke-width="2.2" stroke-linecap="round"/></svg>
<svg style="left:515px;top:89px" width="15" height="14" viewBox="0 0 15 14"><path d="M0.5 0.5L14.5 13.5H0.5z" fill="#cfcfcf"/><path d="M3.6 7.4L8 11.1H3.6z" fill="#282828"/></svg>
<div class="a" style="left:552px;top:82px;width:28px;height:29px;background:#3e3e3e;border-radius:4px;"></div>
<svg style="left:556px;top:86px" width="20" height="20" viewBox="0 0 20 20"><path d="M10 2.8L17.1 6.6V13.4L10 17.2 2.9 13.4V6.6z" fill="#5aa5f5"/><path d="M7.2 6.9L9.9 5.2 12.6 6.9 9.9 8.6z" fill="#3e3e3e"/><path d="M5.3 9L8.7 10.8V13.9L5.3 12.1z" fill="#3e3e3e"/></svg>
<svg style="left:592px;top:90px" width="14" height="14" viewBox="0 0 14 14"><g fill="#cfcfcf"><rect x="1" y="1" width="2" height="2"/><rect x="7" y="1" width="2" height="2"/><rect x="1" y="7" width="2" height="2"/></g><path d="M6.6 13V8.8a3 3 0 0 1 6 0V13" stroke="#cfcfcf" stroke-width="2.2" fill="none"/></svg>
<svg style="left:620px;top:86px" width="20" height="20" viewBox="0 0 20 20"><g fill="#cfcfcf"><rect x="4" y="1.9" width="1.1" height="15.2"/><rect x="8.9" y="1.9" width="1.1" height="7.1"/><rect x="14" y="1.9" width="1.1" height="6.1"/><rect x="1.9" y="4" width="15.2" height="1.1"/><rect x="1.9" y="8.9" width="7.7" height="1.1"/><rect x="1.9" y="14" width="6.1" height="1.1"/></g><path d="M10.1 17V13a2.9 2.9 0 0 1 5.8 0V17" stroke="#cfcfcf" stroke-width="2.2" fill="none"/></svg>
<svg style="left:659px;top:87px" width="7" height="19" viewBox="0 0 7 19"><circle cx="3.2" cy="3.2" r="2.0" fill="#d0d0d0"/><circle cx="3.2" cy="9.2" r="2.0" fill="#d0d0d0"/><circle cx="3.2" cy="15.2" r="2.0" fill="#d0d0d0"/></svg>
<svg style="left:700px;top:89px" width="13" height="14" viewBox="0 0 13 14"><path d="M3.2 7V4.4a3.3 3.3 0 0 1 6.6 0V7" stroke="#cfcfcf" stroke-width="2" fill="none"/><rect x="0.3" y="6.4" width="12.4" height="7.6" rx="0.8" fill="#cfcfcf"/><rect x="5.6" y="8.6" width="1.8" height="3" fill="#282828"/></svg>
<svg style="left:730px;top:88px" width="16" height="16" viewBox="0 0 16 16"><rect x="1" y="7" width="7.6" height="7.6" fill="#6a6a6a"/><rect x="8" y="1.6" width="6.4" height="6.4" stroke="#6a6a6a" stroke-width="1.6" fill="none"/><g fill="#f2f2f2"><rect x="0" y="0" width="2.4" height="2.4"/><rect x="12.6" y="0" width="2.4" height="2.4"/><rect x="0" y="12.6" width="2.4" height="2.4"/><rect x="12.6" y="12.6" width="2.4" height="2.4"/></g></svg>
<svg style="left:775px;top:89px" width="14" height="14" viewBox="0 0 14 14"><g fill="#cfcfcf" transform="rotate(-45 7 7)"><rect x="2.4" y="5.2" width="9.2" height="3.6"/><circle cx="2.4" cy="4.8" r="2.2"/><circle cx="2.4" cy="9.2" r="2.2"/><circle cx="11.6" cy="4.8" r="2.2"/><circle cx="11.6" cy="9.2" r="2.2"/></g></svg>
<div class="t" style="left:817.9px;top:89.08px;font-size:14.5px;color:#cfcfcf;letter-spacing:0.2px;">View</div>
<div class="a" style="left:256px;top:117px;width:646px;height:586px;background:#4d4d4d;"></div>
<div class="a" style="left:256px;top:117px;width:646px;height:16px;background:#262626;"></div>
<div class="a" style="left:256px;top:117px;width:16px;height:586px;background:#262626;"></div>
<div class="a" style="left:256px;top:117px;width:16px;height:16px;background:#858585;"></div>
<svg style="left:256px;top:117px" width="646" height="16" viewBox="0 0 646 16"><rect x="26" y="12" width="1" height="4" fill="#8a8a8a"/><rect x="50" y="12" width="1" height="4" fill="#8a8a8a"/><rect x="73" y="0" width="1" height="16" fill="#8a8a8a"/><rect x="96" y="12" width="1" height="4" fill="#8a8a8a"/><rect x="120" y="12" width="1" height="4" fill="#8a8a8a"/><rect x="143" y="12" width="1" height="4" fill="#8a8a8a"/><rect x="166" y="12" width="1" height="4" fill="#8a8a8a"/><rect x="190" y="5" width="1" height="11" fill="#8a8a8a"/><rect x="213" y="12" width="1" height="4" fill="#8a8a8a"/><rect x="236" y="12" width="1" height="4" fill="#8a8a8a"/><rect x="260" y="12" width="1" height="4" fill="#8a8a8a"/><rect x="283" y="12" width="1" height="4" fill="#8a8a8a"/><rect x="307" y="0" width="1" height="16" fill="#8a8a8a"/><rect x="330" y="12" width="1" height="4" fill="#8a8a8a"/><rect x="353" y="12" width="1" height="4" fill="#8a8a8a"/><rect x="377" y="12" width="1" height="4" fill="#8a8a8a"/><rect x="400" y="12" width="1" height="4" fill="#8a8a8a"/><rect x="423" y="5" width="1" height="11" fill="#8a8a8a"/><rect x="447" y="12" width="1" height="4" fill="#8a8a8a"/><rect x="470" y="12" width="1" height="4" fill="#8a8a8a"/><rect x="493" y="12" width="1" height="4" fill="#8a8a8a"/><rect x="517" y="12" width="1" height="4" fill="#8a8a8a"/><rect x="540" y="0" width="1" height="16" fill="#8a8a8a"/><rect x="563" y="12" width="1" height="4" fill="#8a8a8a"/><rect x="587" y="12" width="1" height="4" fill="#8a8a8a"/><rect x="610" y="12" width="1" height="4" fill="#8a8a8a"/><rect x="633" y="12" width="1" height="4" fill="#8a8a8a"/></svg>
<div class="t" style="left:332px;top:117.20px;font-size:9.5px;color:#d4d4d4;">0</div>
<div class="t" style="left:566px;top:117.20px;font-size:9.5px;color:#d4d4d4;">500</div>
<div class="t" style="left:799px;top:117.20px;font-size:9.5px;color:#d4d4d4;">1000</div>
<svg style="left:256px;top:117px" width="16" height="586" viewBox="0 0 16 586"><rect x="5" y="28" width="11" height="1" fill="#8a8a8a"/><rect x="12" y="51" width="4" height="1" fill="#8a8a8a"/><rect x="12" y="74" width="4" height="1" fill="#8a8a8a"/><rect x="12" y="98" width="4" height="1" fill="#8a8a8a"/><rect x="12" y="121" width="4" height="1" fill="#8a8a8a"/><rect x="0" y="145" width="16" height="1" fill="#8a8a8a"/><rect x="12" y="168" width="4" height="1" fill="#8a8a8a"/><rect x="12" y="191" width="4" height="1" fill="#8a8a8a"/><rect x="12" y="215" width="4" height="1" fill="#8a8a8a"/><rect x="12" y="238" width="4" height="1" fill="#8a8a8a"/><rect x="5" y="261" width="11" height="1" fill="#8a8a8a"/><rect x="12" y="285" width="4" height="1" fill="#8a8a8a"/><rect x="12" y="308" width="4" height="1" fill="#8a8a8a"/><rect x="12" y="331" width="4" height="1" fill="#8a8a8a"/><rect x="12" y="355" width="4" height="1" fill="#8a8a8a"/><rect x="0" y="378" width="16" height="1" fill="#8a8a8a"/><rect x="12" y="401" width="4" height="1" fill="#8a8a8a"/><rect x="12" y="425" width="4" height="1" fill="#8a8a8a"/><rect x="12" y="448" width="4" height="1" fill="#8a8a8a"/><rect x="12" y="471" width="4" height="1" fill="#8a8a8a"/><rect x="5" y="495" width="11" height="1" fill="#8a8a8a"/><rect x="12" y="518" width="4" height="1" fill="#8a8a8a"/><rect x="12" y="541" width="4" height="1" fill="#8a8a8a"/><rect x="12" y="565" width="4" height="1" fill="#8a8a8a"/></svg>
<div class="t" style="left:255.5px;top:260.1px;font-size:9.5px;color:#cfcfcf;transform-origin:0 0;transform:rotate(-90deg)">0</div>
<div class="t" style="left:255.5px;top:493.6px;font-size:9.5px;color:#cfcfcf;transform-origin:0 0;transform:rotate(-90deg)">500</div>
<div class="a" style="left:256px;top:117px;width:646px;height:586px;border:2px solid rgba(255,255,255,0.07);border-bottom-width:2px"></div>
<svg style="left:0px;top:0px" width="1152" height="750" viewBox="0 0 1152 750"><defs><linearGradient id="ballg" x1="0" y1="0" x2="1" y2="1"><stop offset="0" stop-color="#6ccbe6"/><stop offset="1" stop-color="#52bade"/></linearGradient><clipPath id="vpc"><rect x="272" y="133" width="628" height="568"/></clipPath></defs><g clip-path="url(#vpc)"><rect x="272" y="262" width="628" height="1.2" fill="#d0405c"/><rect x="330.5" y="262.5" width="537" height="302" fill="none" stroke="#5a58a8" stroke-width="1"/><rect x="330.5" y="262" width="537" height="1.2" fill="#b04c9a"/><g transform="translate(399 492) rotate(107.5)"><rect x="-13.6" y="-72" width="27.2" height="144" rx="13.6" fill="#0e9cbf"/><rect x="-12.4" y="-70.8" width="24.8" height="141.6" rx="12.4" fill="#704c72"/><rect x="-10.6" y="-69" width="21.2" height="138" rx="10.6" fill="#847890"/><rect x="-7.8" y="-66" width="15.6" height="132" rx="7.8" fill="#8b869d"/><rect x="-2.5" y="-63" width="5" height="126" fill="#83698a"/><circle cx="0" cy="-50" r="3.4" fill="#857392" stroke="#6a4a70" stroke-width="1.7"/><circle cx="0.9" cy="-50.5" r="0.9" fill="#7fd6e6"/><circle cx="0" cy="50" r="3.4" fill="#857392" stroke="#6a4a70" stroke-width="1.7"/><circle cx="0.9" cy="49.5" r="0.9" fill="#7fd6e6"/><circle cx="5.5" cy="-62" r="1.6" fill="#86dbe8"/><circle cx="2.8" cy="-64" r="0.8" fill="#86dbe8"/><circle cx="7.2" cy="-59" r="0.7" fill="#86dbe8"/><circle cx="-5.5" cy="62" r="1.6" fill="#86dbe8"/><circle cx="-7.2" cy="59" r="0.7" fill="#86dbe8"/><circle cx="-2.8" cy="64" r="0.8" fill="#86dbe8"/><g transform="rotate(0)"><rect x="-1.5" y="-8" width="3" height="4.4" fill="#d8d0d8" stroke="#4a3c4c" stroke-width="1" transform="rotate(0)"/><rect x="-1.5" y="-8" width="3" height="4.4" fill="#d8d0d8" stroke="#4a3c4c" stroke-width="1" transform="rotate(90)"/><rect x="-1.5" y="-8" width="3" height="4.4" fill="#d8d0d8" stroke="#4a3c4c" stroke-width="1" transform="rotate(180)"/><rect x="-1.5" y="-8" width="3" height="4.4" fill="#d8d0d8" stroke="#4a3c4c" stroke-width="1" transform="rotate(270)"/><circle cx="0" cy="0" r="3.1" fill="#cfc9d0" stroke="#4a3c4c" stroke-width="0.9"/></g></g><g transform="translate(344.7 420) rotate(0)"><rect x="-13.6" y="-72" width="27.2" height="144" rx="13.6" fill="#0e9cbf"/><rect x="-12.4" y="-70.8" width="24.8" height="141.6" rx="12.4" fill="#704c72"/><rect x="-10.6" y="-69" width="21.2" height="138" rx="10.6" fill="#847890"/><rect x="-7.8" y="-66" width="15.6" height="132" rx="7.8" fill="#8b869d"/><rect x="-2.5" y="-63" width="5" height="126" fill="#83698a"/><circle cx="0" cy="-50" r="3.4" fill="#857392" stroke="#6a4a70" stroke-width="1.7"/><circle cx="0.9" cy="-50.5" r="0.9" fill="#7fd6e6"/><circle cx="0" cy="50" r="3.4" fill="#857392" stroke="#6a4a70" stroke-width="1.7"/><circle cx="0.9" cy="49.5" r="0.9" fill="#7fd6e6"/><circle cx="5.5" cy="-62" r="1.6" fill="#86dbe8"/><circle cx="2.8" cy="-64" r="0.8" fill="#86dbe8"/><circle cx="7.2" cy="-59" r="0.7" fill="#86dbe8"/><circle cx="-5.5" cy="62" r="1.6" fill="#86dbe8"/><circle cx="-7.2" cy="59" r="0.7" fill="#86dbe8"/><circle cx="-2.8" cy="64" r="0.8" fill="#86dbe8"/><g transform="rotate(0)"><rect x="-1.5" y="-8" width="3" height="4.4" fill="#d8d0d8" stroke="#4a3c4c" stroke-width="1" transform="rotate(0)"/><rect x="-1.5" y="-8" width="3" height="4.4" fill="#d8d0d8" stroke="#4a3c4c" stroke-width="1" transform="rotate(90)"/><rect x="-1.5" y="-8" width="3" height="4.4" fill="#d8d0d8" stroke="#4a3c4c" stroke-width="1" transform="rotate(180)"/><rect x="-1.5" y="-8" width="3" height="4.4" fill="#d8d0d8" stroke="#4a3c4c" stroke-width="1" transform="rotate(270)"/><circle cx="0" cy="0" r="3.1" fill="#cfc9d0" stroke="#4a3c4c" stroke-width="0.9"/></g></g><g transform="translate(515 529) rotate(90)"><rect x="-13.6" y="-72" width="27.2" height="144" rx="13.6" fill="#0e9cbf"/><rect x="-12.4" y="-70.8" width="24.8" height="141.6" rx="12.4" fill="#704c72"/><rect x="-10.6" y="-69" width="21.2" height="138" rx="10.6" fill="#847890"/><rect x="-7.8" y="-66" width="15.6" height="132" rx="7.8" fill="#8b869d"/><rect x="-2.5" y="-63" width="5" height="126" fill="#83698a"/><circle cx="0" cy="-50" r="3.4" fill="#857392" stroke="#6a4a70" stroke-width="1.7"/><circle cx="0.9" cy="-50.5" r="0.9" fill="#7fd6e6"/><circle cx="0" cy="50" r="3.4" fill="#857392" stroke="#6a4a70" stroke-width="1.7"/><circle cx="0.9" cy="49.5" r="0.9" fill="#7fd6e6"/><circle cx="5.5" cy="-62" r="1.6" fill="#86dbe8"/><circle cx="2.8" cy="-64" r="0.8" fill="#86dbe8"/><circle cx="7.2" cy="-59" r="0.7" fill="#86dbe8"/><circle cx="-5.5" cy="62" r="1.6" fill="#86dbe8"/><circle cx="-7.2" cy="59" r="0.7" fill="#86dbe8"/><circle cx="-2.8" cy="64" r="0.8" fill="#86dbe8"/><g transform="rotate(0)"><rect x="-1.5" y="-8" width="3" height="4.4" fill="#d8d0d8" stroke="#4a3c4c" stroke-width="1" transform="rotate(0)"/><rect x="-1.5" y="-8" width="3" height="4.4" fill="#d8d0d8" stroke="#4a3c4c" stroke-width="1" transform="rotate(90)"/><rect x="-1.5" y="-8" width="3" height="4.4" fill="#d8d0d8" stroke="#4a3c4c" stroke-width="1" transform="rotate(180)"/><rect x="-1.5" y="-8" width="3" height="4.4" fill="#d8d0d8" stroke="#4a3c4c" stroke-width="1" transform="rotate(270)"/><circle cx="0" cy="0" r="3.1" fill="#cfc9d0" stroke="#4a3c4c" stroke-width="0.9"/></g></g><g transform="translate(741 493.4) rotate(75)"><rect x="-13.6" y="-72" width="27.2" height="144" rx="13.6" fill="#0e9cbf"/><rect x="-12.4" y="-70.8" width="24.8" height="141.6" rx="12.4" fill="#704c72"/><rect x="-10.6" y="-69" width="21.2" height="138" rx="10.6" fill="#847890"/><rect x="-7.8" y="-66" width="15.6" height="132" rx="7.8" fill="#8b869d"/><rect x="-2.5" y="-63" width="5" height="126" fill="#83698a"/><circle cx="0" cy="-50" r="3.4" fill="#857392" stroke="#6a4a70" stroke-width="1.7"/><circle cx="0.9" cy="-50.5" r="0.9" fill="#7fd6e6"/><circle cx="0" cy="50" r="3.4" fill="#857392" stroke="#6a4a70" stroke-width="1.7"/><circle cx="0.9" cy="49.5" r="0.9" fill="#7fd6e6"/><circle cx="5.5" cy="-62" r="1.6" fill="#86dbe8"/><circle cx="2.8" cy="-64" r="0.8" fill="#86dbe8"/><circle cx="7.2" cy="-59" r="0.7" fill="#86dbe8"/><circle cx="-5.5" cy="62" r="1.6" fill="#86dbe8"/><circle cx="-7.2" cy="59" r="0.7" fill="#86dbe8"/><circle cx="-2.8" cy="64" r="0.8" fill="#86dbe8"/><g transform="rotate(0)"><rect x="-1.5" y="-8" width="3" height="4.4" fill="#d8d0d8" stroke="#4a3c4c" stroke-width="1" transform="rotate(0)"/><rect x="-1.5" y="-8" width="3" height="4.4" fill="#d8d0d8" stroke="#4a3c4c" stroke-width="1" transform="rotate(90)"/><rect x="-1.5" y="-8" width="3" height="4.4" fill="#d8d0d8" stroke="#4a3c4c" stroke-width="1" transform="rotate(180)"/><rect x="-1.5" y="-8" width="3" height="4.4" fill="#d8d0d8" stroke="#4a3c4c" stroke-width="1" transform="rotate(270)"/><circle cx="0" cy="0" r="3.1" fill="#cfc9d0" stroke="#4a3c4c" stroke-width="0.9"/></g></g><g transform="translate(657 529) rotate(90)"><rect x="-13.6" y="-72" width="27.2" height="144" rx="13.6" fill="#0e9cbf"/><rect x="-12.4" y="-70.8" width="24.8" height="141.6" rx="12.4" fill="#704c72"/><rect x="-10.6" y="-69" width="21.2" height="138" rx="10.6" fill="#847890"/><rect x="-7.8" y="-66" width="15.6" height="132" rx="7.8" fill="#8b869d"/><rect x="-2.5" y="-63" width="5" height="126" fill="#83698a"/><circle cx="0" cy="-50" r="3.4" fill="#857392" stroke="#6a4a70" stroke-width="1.7"/><circle cx="0.9" cy="-50.5" r="0.9" fill="#7fd6e6"/><circle cx="0" cy="50" r="3.4" fill="#857392" stroke="#6a4a70" stroke-width="1.7"/><circle cx="0.9" cy="49.5" r="0.9" fill="#7fd6e6"/><circle cx="5.5" cy="-62" r="1.6" fill="#86dbe8"/><circle cx="2.8" cy="-64" r="0.8" fill="#86dbe8"/><circle cx="7.2" cy="-59" r="0.7" fill="#86dbe8"/><circle cx="-5.5" cy="62" r="1.6" fill="#86dbe8"/><circle cx="-7.2" cy="59" r="0.7" fill="#86dbe8"/><circle cx="-2.8" cy="64" r="0.8" fill="#86dbe8"/><g transform="rotate(0)"><rect x="-1.5" y="-8" width="3" height="4.4" fill="#d8d0d8" stroke="#4a3c4c" stroke-width="1" transform="rotate(0)"/><rect x="-1.5" y="-8" width="3" height="4.4" fill="#d8d0d8" stroke="#4a3c4c" stroke-width="1" transform="rotate(90)"/><rect x="-1.5" y="-8" width="3" height="4.4" fill="#d8d0d8" stroke="#4a3c4c" stroke-width="1" transform="rotate(180)"/><rect x="-1.5" y="-8" width="3" height="4.4" fill="#d8d0d8" stroke="#4a3c4c" stroke-width="1" transform="rotate(270)"/><circle cx="0" cy="0" r="3.1" fill="#cfc9d0" stroke="#4a3c4c" stroke-width="0.9"/></g></g><g transform="translate(795.6 422.5) rotate(0)"><rect x="-13.6" y="-72" width="27.2" height="144" rx="13.6" fill="#0e9cbf"/><rect x="-12.4" y="-70.8" width="24.8" height="141.6" rx="12.4" fill="#704c72"/><rect x="-10.6" y="-69" width="21.2" height="138" rx="10.6" fill="#847890"/><rect x="-7.8" y="-66" width="15.6" height="132" rx="7.8" fill="#8b869d"/><rect x="-2.5" y="-63" width="5" height="126" fill="#83698a"/><circle cx="0" cy="-50" r="3.4" fill="#857392" stroke="#6a4a70" stroke-width="1.7"/><circle cx="0.9" cy="-50.5" r="0.9" fill="#7fd6e6"/><circle cx="0" cy="50" r="3.4" fill="#857392" stroke="#6a4a70" stroke-width="1.7"/><circle cx="0.9" cy="49.5" r="0.9" fill="#7fd6e6"/><circle cx="5.5" cy="-62" r="1.6" fill="#86dbe8"/><circle cx="2.8" cy="-64" r="0.8" fill="#86dbe8"/><circle cx="7.2" cy="-59" r="0.7" fill="#86dbe8"/><circle cx="-5.5" cy="62" r="1.6" fill="#86dbe8"/><circle cx="-7.2" cy="59" r="0.7" fill="#86dbe8"/><circle cx="-2.8" cy="64" r="0.8" fill="#86dbe8"/><g transform="rotate(0)"><rect x="-1.5" y="-8" width="3" height="4.4" fill="#d8d0d8" stroke="#4a3c4c" stroke-width="1" transform="rotate(0)"/><rect x="-1.5" y="-8" width="3" height="4.4" fill="#d8d0d8" stroke="#4a3c4c" stroke-width="1" transform="rotate(90)"/><rect x="-1.5" y="-8" width="3" height="4.4" fill="#d8d0d8" stroke="#4a3c4c" stroke-width="1" transform="rotate(180)"/><rect x="-1.5" y="-8" width="3" height="4.4" fill="#d8d0d8" stroke="#4a3c4c" stroke-width="1" transform="rotate(270)"/><circle cx="0" cy="0" r="3.1" fill="#cfc9d0" stroke="#4a3c4c" stroke-width="0.9"/></g></g><g transform="translate(546 363.6) rotate(31)"><rect x="-13.6" y="-72" width="27.2" height="144" rx="13.6" fill="#0e9cbf"/><rect x="-12.4" y="-70.8" width="24.8" height="141.6" rx="12.4" fill="#704c72"/><rect x="-10.6" y="-69" width="21.2" height="138" rx="10.6" fill="#847890"/><rect x="-7.8" y="-66" width="15.6" height="132" rx="7.8" fill="#8b869d"/><rect x="-2.5" y="-63" width="5" height="126" fill="#83698a"/><circle cx="0" cy="-50" r="3.4" fill="#857392" stroke="#6a4a70" stroke-width="1.7"/><circle cx="0.9" cy="-50.5" r="0.9" fill="#7fd6e6"/><circle cx="0" cy="50" r="3.4" fill="#857392" stroke="#6a4a70" stroke-width="1.7"/><circle cx="0.9" cy="49.5" r="0.9" fill="#7fd6e6"/><circle cx="5.5" cy="-62" r="1.6" fill="#86dbe8"/><circle cx="2.8" cy="-64" r="0.8" fill="#86dbe8"/><circle cx="7.2" cy="-59" r="0.7" fill="#86dbe8"/><circle cx="-5.5" cy="62" r="1.6" fill="#86dbe8"/><circle cx="-7.2" cy="59" r="0.7" fill="#86dbe8"/><circle cx="-2.8" cy="64" r="0.8" fill="#86dbe8"/><g transform="rotate(0)"><rect x="-1.5" y="-8" width="3" height="4.4" fill="#d8d0d8" stroke="#4a3c4c" stroke-width="1" transform="rotate(0)"/><rect x="-1.5" y="-8" width="3" height="4.4" fill="#d8d0d8" stroke="#4a3c4c" stroke-width="1" transform="rotate(90)"/><rect x="-1.5" y="-8" width="3" height="4.4" fill="#d8d0d8" stroke="#4a3c4c" stroke-width="1" transform="rotate(180)"/><rect x="-1.5" y="-8" width="3" height="4.4" fill="#d8d0d8" stroke="#4a3c4c" stroke-width="1" transform="rotate(270)"/><circle cx="0" cy="0" r="3.1" fill="#cfc9d0" stroke="#4a3c4c" stroke-width="0.9"/></g></g><g transform="translate(603.4 365.6) rotate(-28.5)"><rect x="-13.6" y="-72" width="27.2" height="144" rx="13.6" fill="#0e9cbf"/><rect x="-12.4" y="-70.8" width="24.8" height="141.6" rx="12.4" fill="#704c72"/><rect x="-10.6" y="-69" width="21.2" height="138" rx="10.6" fill="#847890"/><rect x="-7.8" y="-66" width="15.6" height="132" rx="7.8" fill="#8b869d"/><rect x="-2.5" y="-63" width="5" height="126" fill="#83698a"/><circle cx="0" cy="-50" r="3.4" fill="#857392" stroke="#6a4a70" stroke-width="1.7"/><circle cx="0.9" cy="-50.5" r="0.9" fill="#7fd6e6"/><circle cx="0" cy="50" r="3.4" fill="#857392" stroke="#6a4a70" stroke-width="1.7"/><circle cx="0.9" cy="49.5" r="0.9" fill="#7fd6e6"/><circle cx="5.5" cy="-62" r="1.6" fill="#86dbe8"/><circle cx="2.8" cy="-64" r="0.8" fill="#86dbe8"/><circle cx="7.2" cy="-59" r="0.7" fill="#86dbe8"/><circle cx="-5.5" cy="62" r="1.6" fill="#86dbe8"/><circle cx="-7.2" cy="59" r="0.7" fill="#86dbe8"/><circle cx="-2.8" cy="64" r="0.8" fill="#86dbe8"/><g transform="rotate(0)"><rect x="-1.5" y="-8" width="3" height="4.4" fill="#d8d0d8" stroke="#4a3c4c" stroke-width="1" transform="rotate(0)"/><rect x="-1.5" y="-8" width="3" height="4.4" fill="#d8d0d8" stroke="#4a3c4c" stroke-width="1" transform="rotate(90)"/><rect x="-1.5" y="-8" width="3" height="4.4" fill="#d8d0d8" stroke="#4a3c4c" stroke-width="1" transform="rotate(180)"/><rect x="-1.5" y="-8" width="3" height="4.4" fill="#d8d0d8" stroke="#4a3c4c" stroke-width="1" transform="rotate(270)"/><circle cx="0" cy="0" r="3.1" fill="#cfc9d0" stroke="#4a3c4c" stroke-width="0.9"/></g></g><g transform="translate(386.5 321.4)"><circle r="17.4" fill="#2ea6cc"/><circle r="15.4" fill="url(#ballg)"/><rect x="-1.3" y="-8" width="2.6" height="3.6" fill="#98cad8" stroke="#4798ae" stroke-width="1" transform="rotate(0)"/><rect x="-1.3" y="-8" width="2.6" height="3.6" fill="#98cad8" stroke="#4798ae" stroke-width="1" transform="rotate(90)"/><rect x="-1.3" y="-8" width="2.6" height="3.6" fill="#98cad8" stroke="#4798ae" stroke-width="1" transform="rotate(180)"/><rect x="-1.3" y="-8" width="2.6" height="3.6" fill="#98cad8" stroke="#4798ae" stroke-width="1" transform="rotate(270)"/><circle r="2.9" fill="#98cad8" stroke="#4798ae" stroke-width="0.8"/></g><g transform="translate(483.6 314.3)"><circle r="17.4" fill="#2ea6cc"/><circle r="15.4" fill="url(#ballg)"/><rect x="-1.3" y="-8" width="2.6" height="3.6" fill="#98cad8" stroke="#4798ae" stroke-width="1" transform="rotate(0)"/><rect x="-1.3" y="-8" width="2.6" height="3.6" fill="#98cad8" stroke="#4798ae" stroke-width="1" transform="rotate(90)"/><rect x="-1.3" y="-8" width="2.6" height="3.6" fill="#98cad8" stroke="#4798ae" stroke-width="1" transform="rotate(180)"/><rect x="-1.3" y="-8" width="2.6" height="3.6" fill="#98cad8" stroke="#4798ae" stroke-width="1" transform="rotate(270)"/><circle r="2.9" fill="#98cad8" stroke="#4798ae" stroke-width="0.8"/></g><g transform="translate(452.5 371.8)"><circle r="17.4" fill="#2ea6cc"/><circle r="15.4" fill="url(#ballg)"/><rect x="-1.3" y="-8" width="2.6" height="3.6" fill="#98cad8" stroke="#4798ae" stroke-width="1" transform="rotate(0)"/><rect x="-1.3" y="-8" width="2.6" height="3.6" fill="#98cad8" stroke="#4798ae" stroke-width="1" transform="rotate(90)"/><rect x="-1.3" y="-8" width="2.6" height="3.6" fill="#98cad8" stroke="#4798ae" stroke-width="1" transform="rotate(180)"/><rect x="-1.3" y="-8" width="2.6" height="3.6" fill="#98cad8" stroke="#4798ae" stroke-width="1" transform="rotate(270)"/><circle r="2.9" fill="#98cad8" stroke="#4798ae" stroke-width="0.8"/></g><g transform="translate(655.6 349.3)"><circle r="17.4" fill="#2ea6cc"/><circle r="15.4" fill="url(#ballg)"/><rect x="-1.3" y="-8" width="2.6" height="3.6" fill="#98cad8" stroke="#4798ae" stroke-width="1" transform="rotate(0)"/><rect x="-1.3" y="-8" width="2.6" height="3.6" fill="#98cad8" stroke="#4798ae" stroke-width="1" transform="rotate(90)"/><rect x="-1.3" y="-8" width="2.6" height="3.6" fill="#98cad8" stroke="#4798ae" stroke-width="1" transform="rotate(180)"/><rect x="-1.3" y="-8" width="2.6" height="3.6" fill="#98cad8" stroke="#4798ae" stroke-width="1" transform="rotate(270)"/><circle r="2.9" fill="#98cad8" stroke="#4798ae" stroke-width="0.8"/></g><g transform="translate(731.7 295.6)"><circle r="17.4" fill="#2ea6cc"/><circle r="15.4" fill="url(#ballg)"/><rect x="-1.3" y="-8" width="2.6" height="3.6" fill="#f24a2e" stroke="#e4eef0" stroke-width="1" transform="rotate(0)"/><rect x="-1.3" y="-8" width="2.6" height="3.6" fill="#f24a2e" stroke="#e4eef0" stroke-width="1" transform="rotate(90)"/><rect x="-1.3" y="-8" width="2.6" height="3.6" fill="#f24a2e" stroke="#e4eef0" stroke-width="1" transform="rotate(180)"/><rect x="-1.3" y="-8" width="2.6" height="3.6" fill="#f24a2e" stroke="#e4eef0" stroke-width="1" transform="rotate(270)"/><circle r="2.9" fill="#f24a2e" stroke="#e4eef0" stroke-width="0.8"/></g><g transform="translate(725.6 414.5)"><circle r="17.4" fill="#2ea6cc"/><circle r="15.4" fill="url(#ballg)"/><rect x="-1.3" y="-8" width="2.6" height="3.6" fill="#98cad8" stroke="#4798ae" stroke-width="1" transform="rotate(0)"/><rect x="-1.3" y="-8" width="2.6" height="3.6" fill="#98cad8" stroke="#4798ae" stroke-width="1" transform="rotate(90)"/><rect x="-1.3" y="-8" width="2.6" height="3.6" fill="#98cad8" stroke="#4798ae" stroke-width="1" transform="rotate(180)"/><rect x="-1.3" y="-8" width="2.6" height="3.6" fill="#98cad8" stroke="#4798ae" stroke-width="1" transform="rotate(270)"/><circle r="2.9" fill="#98cad8" stroke="#4798ae" stroke-width="0.8"/></g></g></svg>
<svg style="left:286px;top:147px" width="14" height="14" viewBox="0 0 14 14"><g fill="#c8c8c8"><rect x="5.2" y="5.2" width="3.6" height="3.6"/></g><g stroke="#c8c8c8" stroke-width="1.5" fill="none"><path d="M4.6 0.8L7 3 9.4 0.8"/><path d="M4.6 13.2L7 11 9.4 13.2"/><path d="M0.8 4.6L3 7 0.8 9.4"/><path d="M13.2 4.6L11 7 13.2 9.4"/></g></svg>
<svg style="left:322px;top:147px" width="14" height="14" viewBox="0 0 14 14"><circle cx="7" cy="7" r="7" fill="#cfcfcf"/><rect x="3" y="6" width="8" height="2.2" fill="#333"/></svg>
<div class="t" style="left:353.6px;top:145.23px;font-size:15px;color:#eeeeee;">46.7 %</div>
<svg style="left:419px;top:147px" width="14" height="14" viewBox="0 0 14 14"><circle cx="7" cy="7" r="7" fill="#cfcfcf"/><rect x="3" y="6" width="8" height="2.2" fill="#333"/><rect x="5.9" y="3" width="2.2" height="8" fill="#333"/></svg>
<div class="a" style="left:330px;top:133px;width:1px;height:130px;background:#86c226;"></div>
<div class="a" style="left:330px;top:263px;width:1px;height:302px;background:#8e9e84;"></div>
<div class="a" style="left:330px;top:565px;width:1px;height:136px;background:#86c226;"></div>
<div class="a" style="left:892px;top:267px;width:6px;height:270px;background:#7a7a7a;border-radius:3px;"></div>
<div class="a" style="left:457px;top:693px;width:226px;height:6px;background:#7a7a7a;border-radius:3px;"></div>
<div class="a" style="left:256px;top:706px;width:646px;height:40px;background:#282828;border-radius:5px;"></div>
<div class="t" style="left:268.2px;top:717.98px;font-size:14.5px;color:#cfcfcf;letter-spacing:0.28px;">Output</div>
<div class="t" style="left:333.3px;top:717.98px;font-size:14.5px;color:#cfcfcf;letter-spacing:0.29px;">Debugger</div>
<div class="t" style="left:419.3px;top:717.98px;font-size:14.5px;color:#cfcfcf;letter-spacing:0.25px;">Audio</div>
<div class="t" style="left:478.4px;top:717.98px;font-size:14.5px;color:#cfcfcf;">Animation</div>
<div class="t" style="left:565.5px;top:717.98px;font-size:14.5px;color:#cfcfcf;">Shader Editor</div>
<div class="a" style="left:805.5px;top:714.5px;width:2px;height:22.5px;background:#1b1b1b;"></div>
<svg style="left:821px;top:719px" width="14" height="14" viewBox="0 0 14 14"><path d="M7 1.2a4.2 4.2 0 0 1 4.2 4.2V9l1.8 2.4H1L2.8 9V5.4A4.2 4.2 0 0 1 7 1.2z" fill="#555" transform="rotate(20 7 7)"/><circle cx="5.8" cy="12.6" r="1.4" fill="#555"/></svg>
<div class="t" style="left:846.8px;top:717.98px;font-size:14.5px;color:#9a9a9a;letter-spacing:0.23px;">4.6.rc1</div>
<div class="a" style="left:905px;top:76px;width:243px;height:670px;background:#282828;border-radius:0 0 5px 5px"></div>
<div class="a" style="left:905px;top:44px;width:97px;height:33px;background:#282828;border-radius:5px 5px 0 0"></div>
<div class="t" style="left:921.2px;top:52.08px;font-size:14.5px;color:#d4d4d4;letter-spacing:0.42px;"><span style="display:inline-block;width:5.4px;height:10.38px;margin:0 1.1px 0 0.3px;vertical-align:baseline;background:linear-gradient(#d4d4d4,#d4d4d4) 50% 0/1.5px 100% no-repeat,linear-gradient(#d4d4d4,#d4d4d4) 0 0/100% 1.3px no-repeat,linear-gradient(#d4d4d4,#d4d4d4) 0 100%/100% 1.3px no-repeat"></span>nspector</div>
<div class="t" style="left:1018.7px;top:52.08px;font-size:14.5px;color:#a9a9a9;">Signals</div>
<svg style="left:1101px;top:54px" width="12" height="12" viewBox="0 0 12 12"><circle cx="6" cy="6" r="6" fill="#6e6e6e"/><path d="M7.2 3L4.2 6l3 3" stroke="#151515" stroke-width="2" fill="none"/></svg>
<svg style="left:1117px;top:54px" width="12" height="12" viewBox="0 0 12 12"><circle cx="6" cy="6" r="6" fill="#cfcfcf"/><path d="M4.8 3l3 3-3 3" stroke="#151515" stroke-width="2" fill="none"/></svg>
<svg style="left:1136px;top:51px" width="7" height="19" viewBox="0 0 7 19"><circle cx="3.2" cy="3.2" r="2.0" fill="#6c6c6c"/><circle cx="3.2" cy="9.2" r="2.0" fill="#6c6c6c"/><circle cx="3.2" cy="15.2" r="2.0" fill="#6c6c6c"/></svg>
<svg style="left:919px;top:87px" width="15" height="15" viewBox="0 0 15 15"><path d="M0 0h7.2L11 3.8V8.4H7.4v5.2H0z" fill="#cfcfcf"/><path d="M7.6 0.4v3.8H11" stroke="#282828" stroke-width="0.8" fill="none"/><path d="M10.6 7.6v7M7.1 11.1h7" stroke="#3fd34a" stroke-width="2.4"/></svg>
<svg style="left:950px;top:88px" width="15" height="14" viewBox="0 0 15 14"><path d="M1 12.6V2a1 1 0 0 1 1-1h3.2l1.6 1.8h5.2a.8.8 0 0 1 .8.8V5" stroke="#cfcfcf" stroke-width="1.4" fill="none"/><path d="M3.2 5.6H14L12.6 13H1.2z" fill="#cfcfcf"/></svg>
<svg style="left:982px;top:87px" width="14" height="14" viewBox="0 0 14 14"><path d="M0 1a1 1 0 0 1 1-1h9.4L14 3.6V13a1 1 0 0 1-1 1H1a1 1 0 0 1-1-1z" fill="#6a6a6a"/><rect x="3" y="0" width="5.6" height="4.2" fill="#282828"/><rect x="5.6" y="0.6" width="1.8" height="3" fill="#6a6a6a"/><circle cx="6.8" cy="9.6" r="1.8" fill="#282828"/></svg>
<svg style="left:1018px;top:85px" width="7" height="19" viewBox="0 0 7 19"><circle cx="3.2" cy="3.2" r="2.1" fill="#d0d0d0"/><circle cx="3.2" cy="9.2" r="2.1" fill="#d0d0d0"/><circle cx="3.2" cy="15.2" r="2.1" fill="#d0d0d0"/></svg>
<svg style="left:1073px;top:88px" width="7" height="13" viewBox="0 0 7 13"><path d="M6.2 0.8L0.8 6.5L6.2 12.2" stroke="#d4d4d4" stroke-width="1.8" fill="none"/></svg>
<svg style="left:1097px;top:88px" width="7" height="13" viewBox="0 0 7 13"><path d="M0.8 0.8L6.2 6.5L0.8 12.2" stroke="#6a6a6a" stroke-width="1.8" fill="none"/></svg>
<svg style="left:1121px;top:88px" width="15" height="14" viewBox="0 0 15 14"><path d="M3.4 4.2A5.8 5.8 0 1 1 5.4 12.6" stroke="#d0d0d0" stroke-width="2" fill="none"/><path d="M0 5.4L4.6 2.6 5 8z" fill="#d0d0d0" transform="rotate(8 3 5)"/><path d="M8.6 4v3.6h2.8" stroke="#d0d0d0" stroke-width="1.8" fill="none"/></svg>
<div class="a" style="left:911px;top:110px;width:199px;height:33px;background:#3e3e3e;border-radius:5px;"></div>
<svg style="left:920px;top:119px" width="14" height="14" viewBox="0 0 14 14"><circle cx="7" cy="7" r="7" fill="#699ef5"/><path d="M5.5 6.5L7.3 2.1Q11.2 1.7 12.9 6.5z" fill="#3e3e3e"/><path d="M2.2 8.9H5.9L8.2 12.7 4.2 12.5Q2.6 11.2 2.2 8.9z" fill="#3e3e3e"/><path d="M1.6 4.6A6.2 6.2 0 0 0 1.4 8" stroke="#3e3e3e" stroke-width="0.7" fill="none"/></svg>
<div class="t" style="left:947.3px;top:118.28px;font-size:14.5px;color:#d6d6d6;">Ball6</div>
<svg style="left:1089px;top:123.5px" width="10" height="6" viewBox="0 0 10 6"><path d="M0.8 0.8L5.0 5.2L9.2 0.8" stroke="#d8d8d8" stroke-width="2" fill="none"/></svg>
<svg style="left:1120px;top:118px" width="16" height="16" viewBox="0 0 16 16"><circle cx="9.6" cy="4.6" r="3.4" stroke="#d0d0d0" stroke-width="1.8" fill="none"/><path d="M7.2 7.2L4.6 9.6" stroke="#d0d0d0" stroke-width="2"/><text x="8" y="16" font-family="Liberation Sans" font-weight="bold" font-size="7.6" text-anchor="middle" fill="#d4d4d4" stroke="#d4d4d4" stroke-width="0.3" textLength="15" lengthAdjust="spacingAndGlyphs">DOC</text></svg>
<div class="a" style="left:911px;top:147px;width:199px;height:28px;background:#1c1c1c;border-radius:4px;"></div>
<div class="t" style="left:919.3px;top:153.18px;font-size:14.5px;color:#8a8a8a;letter-spacing:0.2px;">Filter Properties</div>
<svg style="left:1087px;top:154px" width="14" height="14" viewBox="0 0 14 14"><circle cx="5.6" cy="5.6" r="4.1" stroke="#d8d8d8" stroke-width="2" fill="none"/><path d="M8.6 8.6l4.2 4.2" stroke="#d8d8d8" stroke-width="2.2" stroke-linecap="round"/></svg>
<svg style="left:1121px;top:154px" width="14" height="15" viewBox="0 0 14 15"><path d="M3 0.4v6" stroke="#d0d0d0" stroke-width="1.4"/><path d="M1.4 2L3 0 4.6 2z" fill="#d0d0d0"/><path d="M1 6.4h4V12a2 2 0 0 1-4 0z" fill="#d0d0d0"/><path d="M8.4 0.6v2.6a2.6 2.6 0 0 0 5.2 0V0.6M11 5.6V14.6" stroke="#d0d0d0" stroke-width="1.8" fill="none"/></svg>
<div class="a" style="left:911px;top:186px;width:217px;height:30px;background:#373737;border-radius:5px;"></div>
<svg style="left:965px;top:194.0px" width="14" height="14" viewBox="0 0 14 14"><circle cx="7" cy="7" r="7" fill="#699ef5"/><path d="M5.5 6.5L7.3 2.1Q11.2 1.7 12.9 6.5z" fill="#373737"/><path d="M2.2 8.9H5.9L8.2 12.7 4.2 12.5Q2.6 11.2 2.2 8.9z" fill="#373737"/><path d="M1.6 4.6A6.2 6.2 0 0 0 1.4 8" stroke="#373737" stroke-width="0.7" fill="none"/></svg>
<div class="t" style="left:986.6px;top:193.08px;font-size:14.5px;color:#d8d8d8;font-weight:bold;letter-spacing:-0.32px;">RigidBody2D</div>
<div class="t" style="left:919.6px;top:225.68px;font-size:14.5px;color:#d2d2d2;">Mass</div>
<div class="a" style="left:1020px;top:221.5px;width:108px;height:28px;background:#1c1c1c;border-radius:4px;"></div>
<div class="t" style="left:1040.8px;top:226.28px;font-size:14.5px;color:#d6d6d6;">1.0</div>
<div class="t" style="left:1068.8px;top:226.28px;font-size:14.5px;color:#777777;">kg</div>
<div class="a" style="left:1028px;top:244.3px;width:88px;height:1.6px;background:#555555;"></div>
<div class="a" style="left:1028px;top:244.3px;width:46px;height:1.6px;background:#c8c8c8;"></div>
<div class="a" style="left:1072px;top:242.6px;width:4.4px;height:4.4px;background:#eeeeee;"></div>
<div class="t" style="left:919.6px;top:257.18px;font-size:14.5px;color:#d2d2d2;">Physics Materi</div>
<div class="a" style="left:1020px;top:252.8px;width:108px;height:28px;background:#1c1c1c;border-radius:4px;"></div>
<svg style="left:1024px;top:254px" width="24" height="24" viewBox="0 0 24 24"><circle cx="15" cy="9" r="3.4" stroke="#6a6a6a" stroke-width="2" fill="none"/><circle cx="9" cy="15" r="3.4" stroke="#6a6a6a" stroke-width="2" fill="none"/><path d="M9.6 14.4L14.4 9.6" stroke="#1c1c1c" stroke-width="4.4" stroke-linecap="round"/><path d="M9.6 14.4L14.4 9.6" stroke="#6a6a6a" stroke-width="2" stroke-linecap="round"/></svg>
<svg style="left:1061px;top:258px" width="15" height="15" viewBox="0 0 15 15"><g fill="#d4d4d4"><path d="M7.5 5.4L14 8.4V11.6L7.5 14.6 1 11.6V8.4z"/></g><path d="M4.6 8.6L7.5 7.2 10.4 8.6 7.5 10z" fill="#1c1c1c"/><path d="M1.6 10.6L7.5 13.2 13.4 10.6" stroke="#1c1c1c" stroke-width="0.9" fill="none"/><g stroke="#d4d4d4" stroke-width="1.4" stroke-linecap="round"><path d="M7.5 1v2.6M3.6 2l1 2.2M11.4 2l-1 2.2"/></g></svg>
<div class="t" style="left:1080.3px;top:257.88px;font-size:14.5px;color:#d6d6d6;">P</div>
<svg style="left:1111px;top:264px" width="8.5" height="5.5" viewBox="0 0 8.5 5.5"><path d="M0.8 0.8L4.25 4.7L7.7 0.8" stroke="#a8a8a8" stroke-width="1.9" fill="none"/></svg>
<div class="t" style="left:919.6px;top:288.18px;font-size:14.5px;color:#d2d2d2;">Gravity Scale</div>
<div class="a" style="left:1020px;top:283px;width:108px;height:29px;background:#1c1c1c;border-radius:4px;"></div>
<div class="t" style="left:1040.8px;top:288.48px;font-size:14.5px;color:#d6d6d6;">4.0</div>
<div class="a" style="left:1028px;top:306.5px;width:88px;height:1.6px;background:#555555;"></div>
<div class="a" style="left:1028px;top:306.5px;width:67.6px;height:1.6px;background:#c8c8c8;"></div>
<div class="a" style="left:1093.4px;top:304.8px;width:4.4px;height:4.4px;background:#eeeeee;"></div>
<svg style="left:917px;top:322px" width="5" height="8" viewBox="0 0 5 8"><path d="M0.8 0.8L4.2 4.0L0.8 7.2" stroke="#8a8a8a" stroke-width="1.7" fill="none"/></svg>
<div class="t" style="left:929.4px;top:316.88px;font-size:14.5px;color:#d6d6d6;font-weight:bold;">Mass Distribution</div>
<svg style="left:917px;top:346.4px" width="5" height="8" viewBox="0 0 5 8"><path d="M0.8 0.8L4.2 4.0L0.8 7.2" stroke="#8a8a8a" stroke-width="1.7" fill="none"/></svg>
<div class="t" style="left:929.4px;top:341.28px;font-size:14.5px;color:#d6d6d6;font-weight:bold;">Deactivation</div>
<svg style="left:917px;top:371.4px" width="5" height="8" viewBox="0 0 5 8"><path d="M0.8 0.8L4.2 4.0L0.8 7.2" stroke="#8a8a8a" stroke-width="1.7" fill="none"/></svg>
<div class="t" style="left:929.4px;top:366.28px;font-size:14.5px;color:#d6d6d6;font-weight:bold;">Solver</div>
<svg style="left:917px;top:396.4px" width="5" height="8" viewBox="0 0 5 8"><path d="M0.8 0.8L4.2 4.0L0.8 7.2" stroke="#8a8a8a" stroke-width="1.7" fill="none"/></svg>
<div class="t" style="left:929.4px;top:391.28px;font-size:14.5px;color:#d6d6d6;font-weight:bold;">Linear</div>
<svg style="left:917px;top:421.4px" width="5" height="8" viewBox="0 0 5 8"><path d="M0.8 0.8L4.2 4.0L0.8 7.2" stroke="#8a8a8a" stroke-width="1.7" fill="none"/></svg>
<div class="t" style="left:929.4px;top:416.28px;font-size:14.5px;color:#d6d6d6;font-weight:bold;">Angular</div>
<svg style="left:917px;top:446.4px" width="5" height="8" viewBox="0 0 5 8"><path d="M0.8 0.8L4.2 4.0L0.8 7.2" stroke="#8a8a8a" stroke-width="1.7" fill="none"/></svg>
<div class="t" style="left:929.4px;top:441.28px;font-size:14.5px;color:#d6d6d6;font-weight:bold;">Constant Forces</div>
<div class="a" style="left:911px;top:466px;width:217px;height:30px;background:#373737;border-radius:5px;"></div>
<svg style="left:947px;top:474.0px" width="14" height="14" viewBox="0 0 14 14"><rect x="0.8" y="0.8" width="12.4" height="12.4" rx="1" stroke="#699ef5" stroke-width="1.4" fill="none"/><rect x="4" y="4" width="6" height="6" stroke="#699ef5" stroke-width="1.6" fill="none"/></svg>
<div class="t" style="left:968.3px;top:473.08px;font-size:14.5px;color:#d8d8d8;font-weight:bold;">CollisionObject2D</div>
<div class="t" style="left:918.9px;top:505.88px;font-size:14.5px;color:#d2d2d2;">Disable Mode</div>
<div class="a" style="left:1020px;top:502px;width:108px;height:28px;background:#1c1c1c;border-radius:4px;"></div>
<div class="t" style="left:1028.3px;top:506.48px;font-size:14.5px;color:#d6d6d6;">Remove</div>
<svg style="left:1109px;top:513px" width="10" height="6" viewBox="0 0 10 6"><path d="M0.8 0.8L5.0 5.2L9.2 0.8" stroke="#d0d0d0" stroke-width="2" fill="none"/></svg>
<svg style="left:917px;top:539.1px" width="5" height="8" viewBox="0 0 5 8"><path d="M0.8 0.8L4.2 4.0L0.8 7.2" stroke="#8a8a8a" stroke-width="1.7" fill="none"/></svg>
<div class="t" style="left:929.4px;top:533.98px;font-size:14.5px;color:#d6d6d6;font-weight:bold;">Collision</div>
<svg style="left:917px;top:563.6px" width="5" height="8" viewBox="0 0 5 8"><path d="M0.8 0.8L4.2 4.0L0.8 7.2" stroke="#8a8a8a" stroke-width="1.7" fill="none"/></svg>
<div class="t" style="left:929.4px;top:558.48px;font-size:14.5px;color:#d6d6d6;font-weight:bold;"><span style="display:inline-block;width:5.4px;height:10.38px;margin:0 1.1px 0 0.3px;vertical-align:baseline;background:linear-gradient(#d6d6d6,#d6d6d6) 50% 0/2.1px 100% no-repeat,linear-gradient(#d6d6d6,#d6d6d6) 0 0/100% 1.9px no-repeat,linear-gradient(#d6d6d6,#d6d6d6) 0 100%/100% 1.9px no-repeat"></span>nput</div>
<div class="a" style="left:911px;top:584px;width:217px;height:31px;background:#373737;border-radius:5px;"></div>
<svg style="left:982px;top:592.5px" width="14" height="14" viewBox="0 0 14 14"><circle cx="6.5" cy="7" r="5" stroke="#699ef5" stroke-width="2" fill="none"/></svg>
<div class="t" style="left:1002.4px;top:591.58px;font-size:14.5px;color:#d8d8d8;font-weight:bold;">Node2D</div>
<svg style="left:917px;top:625.7px" width="5" height="8" viewBox="0 0 5 8"><path d="M0.8 0.8L4.2 4.0L0.8 7.2" stroke="#8a8a8a" stroke-width="1.7" fill="none"/></svg>
<div class="t" style="left:929.4px;top:620.58px;font-size:14.5px;color:#d6d6d6;font-weight:bold;">Transform</div>
<div class="t" style="left:1053.4px;top:620.58px;font-size:14.5px;color:#8a8a8a;letter-spacing:0.32px;">(1 change)</div>
<div class="a" style="left:911px;top:646px;width:217px;height:31px;background:#373737;border-radius:5px;"></div>
<svg style="left:967px;top:654.5px" width="14" height="14" viewBox="0 0 14 14"><path d="M13.4 0.8L5.6 8.6 7.4 10.4 15.2 2.6z" fill="#9a9a9a" transform="translate(-1 0)"/><path d="M4.4 9.6Q1.6 9.6 1.2 13.4 4.8 13.2 5.6 11.2z" fill="#9a9a9a"/></svg>
<div class="t" style="left:988.4px;top:653.58px;font-size:14.5px;color:#d8d8d8;font-weight:bold;letter-spacing:0.1px;">Canvas<span style="display:inline-block;width:5.4px;height:10.38px;margin:0 1.1px 0 0.3px;vertical-align:baseline;background:linear-gradient(#d8d8d8,#d8d8d8) 50% 0/2.1px 100% no-repeat,linear-gradient(#d8d8d8,#d8d8d8) 0 0/100% 1.9px no-repeat,linear-gradient(#d8d8d8,#d8d8d8) 0 100%/100% 1.9px no-repeat"></span>tem</div>
<svg style="left:917px;top:688px" width="5" height="8" viewBox="0 0 5 8"><path d="M0.8 0.8L4.2 4.0L0.8 7.2" stroke="#8a8a8a" stroke-width="1.7" fill="none"/></svg>
<div class="t" style="left:929.4px;top:682.88px;font-size:14.5px;color:#d6d6d6;font-weight:bold;">Visibility</div>
<svg style="left:917px;top:713px" width="5" height="8" viewBox="0 0 5 8"><path d="M0.8 0.8L4.2 4.0L0.8 7.2" stroke="#8a8a8a" stroke-width="1.7" fill="none"/></svg>
<div class="t" style="left:929.4px;top:707.88px;font-size:14.5px;color:#d6d6d6;font-weight:bold;">Ordering</div>
<svg style="left:917px;top:737.4px" width="5" height="8" viewBox="0 0 5 8"><path d="M0.8 0.8L4.2 4.0L0.8 7.2" stroke="#8a8a8a" stroke-width="1.7" fill="none"/></svg>
<div class="t" style="left:929.4px;top:732.28px;font-size:14.5px;color:#d6d6d6;font-weight:bold;">Texture</div>
<div class="a" style="left:1132px;top:186px;width:6px;height:383px;background:#484848;border-radius:3px;"></div>
</body></html>
